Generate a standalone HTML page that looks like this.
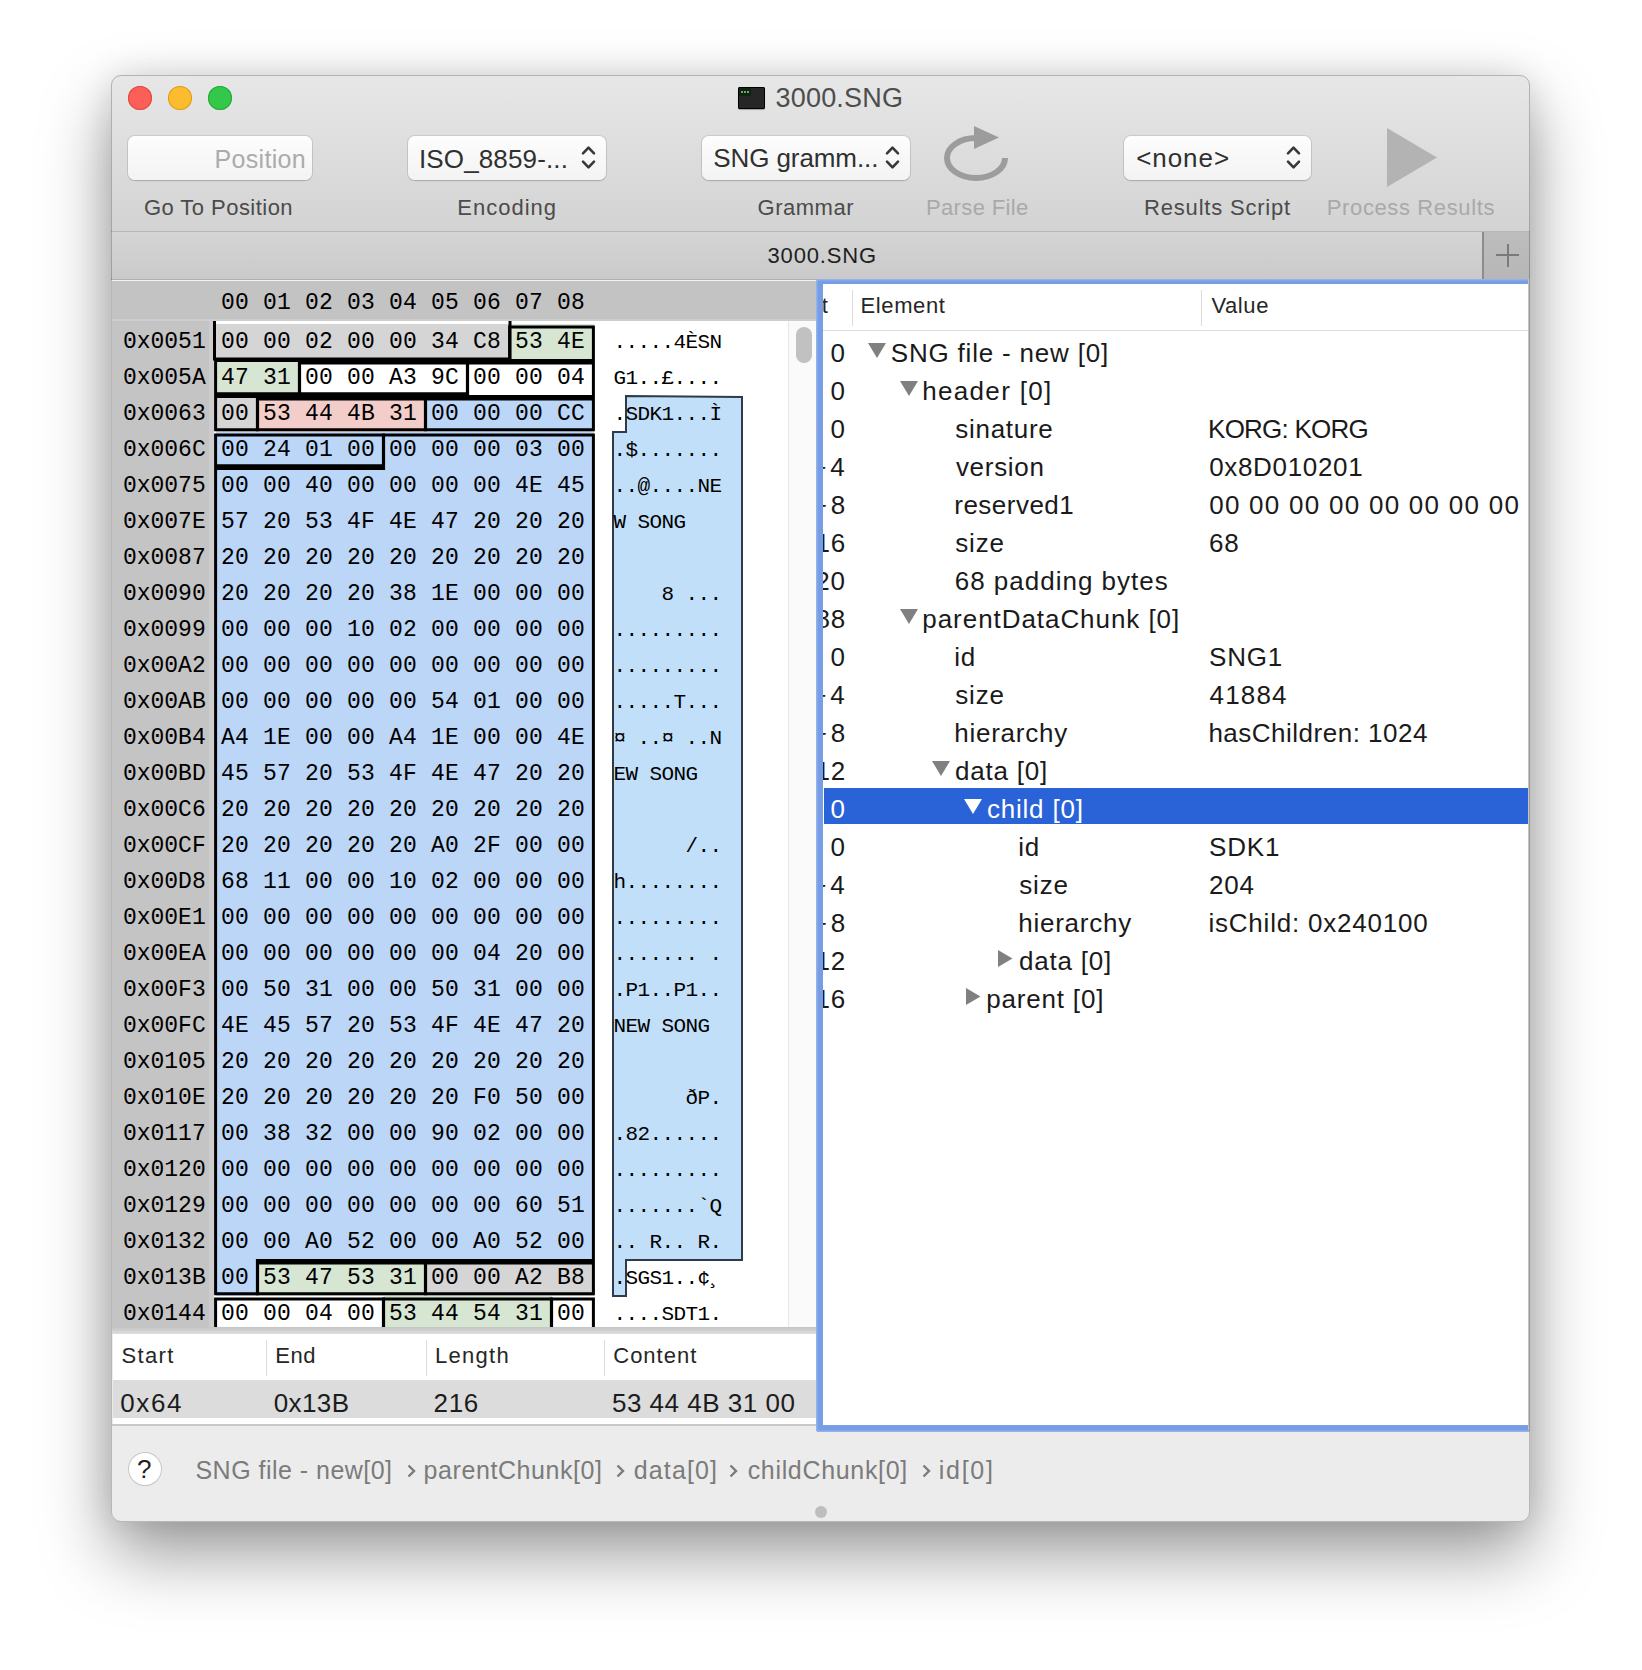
<!DOCTYPE html>
<html><head><meta charset="utf-8">
<style>
html,body{margin:0;padding:0;}
body{width:1642px;height:1670px;background:#ffffff;position:relative;overflow:hidden;font-family:"Liberation Sans",sans-serif;}
.abs{position:absolute;}
.c{position:absolute;}
#win{position:absolute;left:111px;top:75px;width:1419px;height:1447px;border-radius:10px;background:#ececec;
 box-shadow:0 0 34px 0 rgba(0,0,0,0.11),0 32px 70px 0 rgba(0,0,0,0.40);overflow:hidden;}
#tb{position:absolute;left:0;top:0;width:1419px;height:156px;background:linear-gradient(#e7e7e7,#d3d3d3);border-bottom:1px solid #b6b6b6;}
.light{position:absolute;width:24px;height:24px;border-radius:50%;top:11px;}
.fld{position:absolute;background:linear-gradient(#fdfdfd,#f3f3f3);border-radius:7px;box-shadow:0 0 0 1px rgba(0,0,0,0.09),0 1px 1.5px rgba(0,0,0,0.14);}
#tab{position:absolute;left:0;top:157px;width:1419px;height:47px;background:linear-gradient(#d5d5d5,#cacaca);border-bottom:1px solid #afafaf;}
.sep{position:absolute;width:1px;background:#dcdcdc;}
</style></head><body>
<div id="win">
 <div id="tb">
  <div class="light" style="left:17px;background:#fc5f57;box-shadow:inset 0 0 0 1px #de4a42;"></div>
  <div class="light" style="left:57px;background:#fdbc2e;box-shadow:inset 0 0 0 1px #dd9d21;"></div>
  <div class="light" style="left:97px;background:#34c84a;box-shadow:inset 0 0 0 1px #25a73a;"></div>
  <div class="abs" style="left:627px;top:12px;width:27px;height:22px;background:#262626;border-radius:2px;box-shadow:inset 0 0 0 1px #000,0 1px 1px rgba(0,0,0,0.3);">
   <div class="abs" style="left:1px;top:1px;width:12px;height:8px;background:#0b260b;"></div>
   <div class="abs" style="left:3px;top:4px;width:9px;height:2px;background:repeating-linear-gradient(90deg,#8a8f8a 0 2px,transparent 2px 3px);"></div>
  </div>
  <div class="fld" style="left:17px;top:61px;width:184px;height:44px;"></div>
  <div class="fld" style="left:297px;top:61px;width:198px;height:44px;">
   <svg class="abs" style="left:172px;top:9px" width="17" height="26" viewBox="0 0 17 26"><path d="M3 8.3 L8.5 2.6 L14 8.3 M3 16.7 L8.5 22.4 L14 16.7" fill="none" stroke="#383838" stroke-width="2.6" stroke-linecap="round" stroke-linejoin="round"/></svg></div>
  <div class="fld" style="left:591px;top:61px;width:208px;height:44px;">
   <svg class="abs" style="left:182px;top:9px" width="17" height="26" viewBox="0 0 17 26"><path d="M3 8.3 L8.5 2.6 L14 8.3 M3 16.7 L8.5 22.4 L14 16.7" fill="none" stroke="#383838" stroke-width="2.6" stroke-linecap="round" stroke-linejoin="round"/></svg></div>
  <svg class="abs" style="left:820px;top:45px" width="80" height="72" viewBox="0 0 80 72">
   <path d="M45 18 A29 20 0 1 0 74 38" fill="none" stroke="#9c9c9c" stroke-width="6"/>
   <path d="M43 6 L68 17.5 L43 29 Z" fill="#9c9c9c"/>
  </svg>
  <div class="fld" style="left:1013px;top:61px;width:187px;height:44px;">
   <svg class="abs" style="left:161px;top:9px" width="17" height="26" viewBox="0 0 17 26"><path d="M3 8.3 L8.5 2.6 L14 8.3 M3 16.7 L8.5 22.4 L14 16.7" fill="none" stroke="#383838" stroke-width="2.6" stroke-linecap="round" stroke-linejoin="round"/></svg></div>
  <svg class="abs" style="left:1276px;top:53px" width="52" height="60" viewBox="0 0 52 60"><path d="M0 0 L50 29.5 L0 59 Z" fill="#b3b3b3"/></svg>
 </div>
 <div id="tab">
  <div class="abs" style="left:1371px;top:0;width:48px;height:47px;background:linear-gradient(#bdbdbd,#b7b7b7);border-left:2px solid #8c8c8c;">
   <div class="abs" style="left:12px;top:22px;width:23px;height:2px;background:#7a7a7a;"></div>
   <div class="abs" style="left:22.5px;top:12px;width:2px;height:23px;background:#7a7a7a;"></div>
  </div>
 </div>
</div>
<div style="position:absolute;left:775.57px;top:85.44px;font-family:'Liberation Sans',sans-serif;font-size:27px;line-height:1;letter-spacing:0.182px;color:#4d4d4d;white-space:pre;">3000.SNG</div>
<div style="position:absolute;left:143.89px;top:197.37px;font-family:'Liberation Sans',sans-serif;font-size:22px;line-height:1;letter-spacing:0.463px;color:#4b4b4b;white-space:pre;">Go To Position</div>
<div style="position:absolute;left:457.20px;top:197.37px;font-family:'Liberation Sans',sans-serif;font-size:22px;line-height:1;letter-spacing:1.026px;color:#4b4b4b;white-space:pre;">Encoding</div>
<div style="position:absolute;left:757.49px;top:197.37px;font-family:'Liberation Sans',sans-serif;font-size:22px;line-height:1;letter-spacing:0.531px;color:#4b4b4b;white-space:pre;">Grammar</div>
<div style="position:absolute;left:926.00px;top:197.37px;font-family:'Liberation Sans',sans-serif;font-size:22px;line-height:1;letter-spacing:0.350px;color:#a9a9a9;white-space:pre;">Parse File</div>
<div style="position:absolute;left:1144.10px;top:197.37px;font-family:'Liberation Sans',sans-serif;font-size:22px;line-height:1;letter-spacing:0.797px;color:#4b4b4b;white-space:pre;">Results Script</div>
<div style="position:absolute;left:1326.80px;top:197.37px;font-family:'Liberation Sans',sans-serif;font-size:22px;line-height:1;letter-spacing:0.618px;color:#a9a9a9;white-space:pre;">Process Results</div>
<div style="position:absolute;left:214.55px;top:146.83px;font-family:'Liberation Sans',sans-serif;font-size:25px;line-height:1;letter-spacing:0.305px;color:#ababab;white-space:pre;">Position</div>
<div style="position:absolute;left:419.00px;top:146.19px;font-family:'Liberation Sans',sans-serif;font-size:26px;line-height:1;letter-spacing:0.132px;color:#303030;white-space:pre;">ISO_8859-...</div>
<div style="position:absolute;left:713.32px;top:145.49px;font-family:'Liberation Sans',sans-serif;font-size:26px;line-height:1;letter-spacing:-0.098px;color:#303030;white-space:pre;">SNG gramm...</div>
<div style="position:absolute;left:1136.22px;top:145.49px;font-family:'Liberation Sans',sans-serif;font-size:26px;line-height:1;letter-spacing:0.929px;color:#303030;white-space:pre;">&lt;none&gt;</div>
<div style="position:absolute;left:767.46px;top:244.87px;font-family:'Liberation Sans',sans-serif;font-size:22px;line-height:1;letter-spacing:0.851px;color:#1e1e1e;white-space:pre;">3000.SNG</div>

<!-- HEX PANEL -->
<div class="abs" style="left:112px;top:280px;width:704px;height:1px;background:#f4f4f4;"></div>
<div class="abs" style="left:112px;top:281px;width:704px;height:1048px;background:#fff;"></div>
<div class="abs" style="left:112px;top:281px;width:704px;height:38px;background:#c3c3c3;"></div>
<div class="abs" style="left:112px;top:319px;width:704px;height:2px;background:#cdcdcd;"></div>
<div class="abs" style="left:112px;top:321px;width:97px;height:1008px;background:#c4c4c4;"></div><div class="abs" style="left:209px;top:321px;width:5px;height:1008px;background:#cdcdcd;"></div>
<div class="abs" style="left:788px;top:321px;width:28px;height:1008px;background:#fafafa;border-left:1px solid #e6e6e6;"></div>
<div class="abs" style="left:796px;top:327px;width:16px;height:36px;border-radius:8px;background:#c1c1c1;"></div>
<div style="position:absolute;left:221.10px;top:291.88px;font-family:'Liberation Mono',monospace;font-size:23px;line-height:1;letter-spacing:0.000px;color:#000;white-space:pre;">00</div>
<div style="position:absolute;left:263.10px;top:291.88px;font-family:'Liberation Mono',monospace;font-size:23px;line-height:1;letter-spacing:0.000px;color:#000;white-space:pre;">01</div>
<div style="position:absolute;left:305.10px;top:291.88px;font-family:'Liberation Mono',monospace;font-size:23px;line-height:1;letter-spacing:0.000px;color:#000;white-space:pre;">02</div>
<div style="position:absolute;left:347.10px;top:291.88px;font-family:'Liberation Mono',monospace;font-size:23px;line-height:1;letter-spacing:0.000px;color:#000;white-space:pre;">03</div>
<div style="position:absolute;left:389.10px;top:291.88px;font-family:'Liberation Mono',monospace;font-size:23px;line-height:1;letter-spacing:0.000px;color:#000;white-space:pre;">04</div>
<div style="position:absolute;left:431.10px;top:291.88px;font-family:'Liberation Mono',monospace;font-size:23px;line-height:1;letter-spacing:0.000px;color:#000;white-space:pre;">05</div>
<div style="position:absolute;left:473.10px;top:291.88px;font-family:'Liberation Mono',monospace;font-size:23px;line-height:1;letter-spacing:0.000px;color:#000;white-space:pre;">06</div>
<div style="position:absolute;left:515.10px;top:291.88px;font-family:'Liberation Mono',monospace;font-size:23px;line-height:1;letter-spacing:0.000px;color:#000;white-space:pre;">07</div>
<div style="position:absolute;left:557.10px;top:291.88px;font-family:'Liberation Mono',monospace;font-size:23px;line-height:1;letter-spacing:0.000px;color:#000;white-space:pre;">08</div>
<div class="abs" style="left:0;top:0;width:1642px;height:1329px;overflow:hidden;clip-path:inset(321px 826px 2px 112px);">
<div class="c" style="left:216px;top:324px;width:294px;height:36px;background:#d5d5d5"></div>
<div class="c" style="left:510px;top:324px;width:84px;height:36px;background:#d7e6d2"></div>
<div class="c" style="left:216px;top:360px;width:84px;height:36px;background:#d7e6d2"></div>
<div class="c" style="left:216px;top:396px;width:42px;height:36px;background:#d5d5d5"></div>
<div class="c" style="left:258px;top:396px;width:168px;height:36px;background:#f2cdc9"></div>
<div class="c" style="left:426px;top:396px;width:168px;height:36px;background:#bcd6f7"></div>
<div class="c" style="left:216px;top:432px;width:378px;height:36px;background:#bcd6f7"></div>
<div class="c" style="left:216px;top:468px;width:378px;height:36px;background:#bcd6f7"></div>
<div class="c" style="left:216px;top:504px;width:378px;height:36px;background:#bcd6f7"></div>
<div class="c" style="left:216px;top:540px;width:378px;height:36px;background:#bcd6f7"></div>
<div class="c" style="left:216px;top:576px;width:378px;height:36px;background:#bcd6f7"></div>
<div class="c" style="left:216px;top:612px;width:378px;height:36px;background:#bcd6f7"></div>
<div class="c" style="left:216px;top:648px;width:378px;height:36px;background:#bcd6f7"></div>
<div class="c" style="left:216px;top:684px;width:378px;height:36px;background:#bcd6f7"></div>
<div class="c" style="left:216px;top:720px;width:378px;height:36px;background:#bcd6f7"></div>
<div class="c" style="left:216px;top:756px;width:378px;height:36px;background:#bcd6f7"></div>
<div class="c" style="left:216px;top:792px;width:378px;height:36px;background:#bcd6f7"></div>
<div class="c" style="left:216px;top:828px;width:378px;height:36px;background:#bcd6f7"></div>
<div class="c" style="left:216px;top:864px;width:378px;height:36px;background:#bcd6f7"></div>
<div class="c" style="left:216px;top:900px;width:378px;height:36px;background:#bcd6f7"></div>
<div class="c" style="left:216px;top:936px;width:378px;height:36px;background:#bcd6f7"></div>
<div class="c" style="left:216px;top:972px;width:378px;height:36px;background:#bcd6f7"></div>
<div class="c" style="left:216px;top:1008px;width:378px;height:36px;background:#bcd6f7"></div>
<div class="c" style="left:216px;top:1044px;width:378px;height:36px;background:#bcd6f7"></div>
<div class="c" style="left:216px;top:1080px;width:378px;height:36px;background:#bcd6f7"></div>
<div class="c" style="left:216px;top:1116px;width:378px;height:36px;background:#bcd6f7"></div>
<div class="c" style="left:216px;top:1152px;width:378px;height:36px;background:#bcd6f7"></div>
<div class="c" style="left:216px;top:1188px;width:378px;height:36px;background:#bcd6f7"></div>
<div class="c" style="left:216px;top:1224px;width:378px;height:36px;background:#bcd6f7"></div>
<div class="c" style="left:216px;top:1260px;width:42px;height:36px;background:#bcd6f7"></div>
<div class="c" style="left:258px;top:1260px;width:168px;height:36px;background:#d7e6d2"></div>
<div class="c" style="left:426px;top:1260px;width:168px;height:36px;background:#d5d5d5"></div>
<div class="c" style="left:384px;top:1296px;width:168px;height:36px;background:#d7e6d2"></div>
<svg class="abs" style="left:0;top:0" width="1642" height="1340"><path d="M626 396 L742 397 L742 1260 L626 1260 L626 1296 L613 1296 L613 432 L626 432 Z" fill="#c2dff9" stroke="#2e3b4a" stroke-width="2"/><g fill="none" stroke="#000" stroke-width="3"><path d="M509.6 327.0 L593.4 327.0 L593.4 360.5 L299.4 360.5 L299.4 393.7 L215.6 393.7 L215.6 360.5 L509.6 360.5 Z"/><path d="M299.6 363.0 L467.4 363.0 L467.4 393.7 L299.6 393.7 Z"/><path d="M467.6 363.0 L593.4 363.0 L593.4 396.5 L257.4 396.5 L257.4 429.7 L215.6 429.7 L215.6 396.5 L467.6 396.5 Z"/><path d="M257.6 399.0 L425.4 399.0 L425.4 429.7 L257.6 429.7 Z"/><path d="M425.6 399.0 L593.4 399.0 L593.4 429.7 L425.6 429.7 Z"/><path d="M215.6 435.0 L383.4 435.0 L383.4 465.7 L215.6 465.7 Z"/><path d="M383.6 435.0 L593.4 435.0 L593.4 1260.5 L257.4 1260.5 L257.4 1293.7 L215.6 1293.7 L215.6 468.5 L383.6 468.5 Z"/><path d="M257.6 1263.0 L425.4 1263.0 L425.4 1293.7 L257.6 1293.7 Z"/><path d="M425.6 1263.0 L593.4 1263.0 L593.4 1293.7 L425.6 1293.7 Z"/><path d="M215.6 1299.0 L383.4 1299.0 L383.4 1329.7 L215.6 1329.7 Z"/><path d="M383.6 1299.0 L551.4 1299.0 L551.4 1329.7 L383.6 1329.7 Z"/><path d="M551.6 1299.0 L593.4 1299.0 L593.4 1329.7 L551.6 1329.7 Z"/><path d="M214.5 300.0 L214.5 359.0 L510.0 359.0 L510.0 300.0"/></g></svg>
<div style="position:absolute;left:122.90px;top:331.38px;font-family:'Liberation Mono',monospace;font-size:23px;line-height:1;letter-spacing:0.000px;color:#000;white-space:pre;">0x0051</div>
<div style="position:absolute;left:221.10px;top:331.38px;font-family:'Liberation Mono',monospace;font-size:23px;line-height:1;letter-spacing:0.000px;color:#000;white-space:pre;">00</div>
<div style="position:absolute;left:263.10px;top:331.38px;font-family:'Liberation Mono',monospace;font-size:23px;line-height:1;letter-spacing:0.000px;color:#000;white-space:pre;">00</div>
<div style="position:absolute;left:305.10px;top:331.38px;font-family:'Liberation Mono',monospace;font-size:23px;line-height:1;letter-spacing:0.000px;color:#000;white-space:pre;">02</div>
<div style="position:absolute;left:347.10px;top:331.38px;font-family:'Liberation Mono',monospace;font-size:23px;line-height:1;letter-spacing:0.000px;color:#000;white-space:pre;">00</div>
<div style="position:absolute;left:389.10px;top:331.38px;font-family:'Liberation Mono',monospace;font-size:23px;line-height:1;letter-spacing:0.000px;color:#000;white-space:pre;">00</div>
<div style="position:absolute;left:431.10px;top:331.38px;font-family:'Liberation Mono',monospace;font-size:23px;line-height:1;letter-spacing:0.000px;color:#000;white-space:pre;">34</div>
<div style="position:absolute;left:473.10px;top:331.38px;font-family:'Liberation Mono',monospace;font-size:23px;line-height:1;letter-spacing:0.000px;color:#000;white-space:pre;">C8</div>
<div style="position:absolute;left:515.10px;top:331.38px;font-family:'Liberation Mono',monospace;font-size:23px;line-height:1;letter-spacing:0.000px;color:#000;white-space:pre;">53</div>
<div style="position:absolute;left:557.10px;top:331.38px;font-family:'Liberation Mono',monospace;font-size:23px;line-height:1;letter-spacing:0.000px;color:#000;white-space:pre;">4E</div>
<div style="position:absolute;left:613.40px;top:332.41px;font-family:'Liberation Mono',monospace;font-size:21px;line-height:1;letter-spacing:-0.600px;color:#000;white-space:pre;">.....4ÈSN</div>
<div style="position:absolute;left:122.90px;top:367.38px;font-family:'Liberation Mono',monospace;font-size:23px;line-height:1;letter-spacing:0.000px;color:#000;white-space:pre;">0x005A</div>
<div style="position:absolute;left:221.10px;top:367.38px;font-family:'Liberation Mono',monospace;font-size:23px;line-height:1;letter-spacing:0.000px;color:#000;white-space:pre;">47</div>
<div style="position:absolute;left:263.10px;top:367.38px;font-family:'Liberation Mono',monospace;font-size:23px;line-height:1;letter-spacing:0.000px;color:#000;white-space:pre;">31</div>
<div style="position:absolute;left:305.10px;top:367.38px;font-family:'Liberation Mono',monospace;font-size:23px;line-height:1;letter-spacing:0.000px;color:#000;white-space:pre;">00</div>
<div style="position:absolute;left:347.10px;top:367.38px;font-family:'Liberation Mono',monospace;font-size:23px;line-height:1;letter-spacing:0.000px;color:#000;white-space:pre;">00</div>
<div style="position:absolute;left:389.10px;top:367.38px;font-family:'Liberation Mono',monospace;font-size:23px;line-height:1;letter-spacing:0.000px;color:#000;white-space:pre;">A3</div>
<div style="position:absolute;left:431.10px;top:367.38px;font-family:'Liberation Mono',monospace;font-size:23px;line-height:1;letter-spacing:0.000px;color:#000;white-space:pre;">9C</div>
<div style="position:absolute;left:473.10px;top:367.38px;font-family:'Liberation Mono',monospace;font-size:23px;line-height:1;letter-spacing:0.000px;color:#000;white-space:pre;">00</div>
<div style="position:absolute;left:515.10px;top:367.38px;font-family:'Liberation Mono',monospace;font-size:23px;line-height:1;letter-spacing:0.000px;color:#000;white-space:pre;">00</div>
<div style="position:absolute;left:557.10px;top:367.38px;font-family:'Liberation Mono',monospace;font-size:23px;line-height:1;letter-spacing:0.000px;color:#000;white-space:pre;">04</div>
<div style="position:absolute;left:613.40px;top:368.41px;font-family:'Liberation Mono',monospace;font-size:21px;line-height:1;letter-spacing:-0.600px;color:#000;white-space:pre;">G1..£....</div>
<div style="position:absolute;left:122.90px;top:403.38px;font-family:'Liberation Mono',monospace;font-size:23px;line-height:1;letter-spacing:0.000px;color:#000;white-space:pre;">0x0063</div>
<div style="position:absolute;left:221.10px;top:403.38px;font-family:'Liberation Mono',monospace;font-size:23px;line-height:1;letter-spacing:0.000px;color:#000;white-space:pre;">00</div>
<div style="position:absolute;left:263.10px;top:403.38px;font-family:'Liberation Mono',monospace;font-size:23px;line-height:1;letter-spacing:0.000px;color:#000;white-space:pre;">53</div>
<div style="position:absolute;left:305.10px;top:403.38px;font-family:'Liberation Mono',monospace;font-size:23px;line-height:1;letter-spacing:0.000px;color:#000;white-space:pre;">44</div>
<div style="position:absolute;left:347.10px;top:403.38px;font-family:'Liberation Mono',monospace;font-size:23px;line-height:1;letter-spacing:0.000px;color:#000;white-space:pre;">4B</div>
<div style="position:absolute;left:389.10px;top:403.38px;font-family:'Liberation Mono',monospace;font-size:23px;line-height:1;letter-spacing:0.000px;color:#000;white-space:pre;">31</div>
<div style="position:absolute;left:431.10px;top:403.38px;font-family:'Liberation Mono',monospace;font-size:23px;line-height:1;letter-spacing:0.000px;color:#000;white-space:pre;">00</div>
<div style="position:absolute;left:473.10px;top:403.38px;font-family:'Liberation Mono',monospace;font-size:23px;line-height:1;letter-spacing:0.000px;color:#000;white-space:pre;">00</div>
<div style="position:absolute;left:515.10px;top:403.38px;font-family:'Liberation Mono',monospace;font-size:23px;line-height:1;letter-spacing:0.000px;color:#000;white-space:pre;">00</div>
<div style="position:absolute;left:557.10px;top:403.38px;font-family:'Liberation Mono',monospace;font-size:23px;line-height:1;letter-spacing:0.000px;color:#000;white-space:pre;">CC</div>
<div style="position:absolute;left:613.40px;top:404.41px;font-family:'Liberation Mono',monospace;font-size:21px;line-height:1;letter-spacing:-0.600px;color:#000;white-space:pre;">.SDK1...Ì</div>
<div style="position:absolute;left:122.90px;top:439.38px;font-family:'Liberation Mono',monospace;font-size:23px;line-height:1;letter-spacing:0.000px;color:#000;white-space:pre;">0x006C</div>
<div style="position:absolute;left:221.10px;top:439.38px;font-family:'Liberation Mono',monospace;font-size:23px;line-height:1;letter-spacing:0.000px;color:#000;white-space:pre;">00</div>
<div style="position:absolute;left:263.10px;top:439.38px;font-family:'Liberation Mono',monospace;font-size:23px;line-height:1;letter-spacing:0.000px;color:#000;white-space:pre;">24</div>
<div style="position:absolute;left:305.10px;top:439.38px;font-family:'Liberation Mono',monospace;font-size:23px;line-height:1;letter-spacing:0.000px;color:#000;white-space:pre;">01</div>
<div style="position:absolute;left:347.10px;top:439.38px;font-family:'Liberation Mono',monospace;font-size:23px;line-height:1;letter-spacing:0.000px;color:#000;white-space:pre;">00</div>
<div style="position:absolute;left:389.10px;top:439.38px;font-family:'Liberation Mono',monospace;font-size:23px;line-height:1;letter-spacing:0.000px;color:#000;white-space:pre;">00</div>
<div style="position:absolute;left:431.10px;top:439.38px;font-family:'Liberation Mono',monospace;font-size:23px;line-height:1;letter-spacing:0.000px;color:#000;white-space:pre;">00</div>
<div style="position:absolute;left:473.10px;top:439.38px;font-family:'Liberation Mono',monospace;font-size:23px;line-height:1;letter-spacing:0.000px;color:#000;white-space:pre;">00</div>
<div style="position:absolute;left:515.10px;top:439.38px;font-family:'Liberation Mono',monospace;font-size:23px;line-height:1;letter-spacing:0.000px;color:#000;white-space:pre;">03</div>
<div style="position:absolute;left:557.10px;top:439.38px;font-family:'Liberation Mono',monospace;font-size:23px;line-height:1;letter-spacing:0.000px;color:#000;white-space:pre;">00</div>
<div style="position:absolute;left:613.40px;top:440.41px;font-family:'Liberation Mono',monospace;font-size:21px;line-height:1;letter-spacing:-0.600px;color:#000;white-space:pre;">.$.......</div>
<div style="position:absolute;left:122.90px;top:475.38px;font-family:'Liberation Mono',monospace;font-size:23px;line-height:1;letter-spacing:0.000px;color:#000;white-space:pre;">0x0075</div>
<div style="position:absolute;left:221.10px;top:475.38px;font-family:'Liberation Mono',monospace;font-size:23px;line-height:1;letter-spacing:0.000px;color:#000;white-space:pre;">00</div>
<div style="position:absolute;left:263.10px;top:475.38px;font-family:'Liberation Mono',monospace;font-size:23px;line-height:1;letter-spacing:0.000px;color:#000;white-space:pre;">00</div>
<div style="position:absolute;left:305.10px;top:475.38px;font-family:'Liberation Mono',monospace;font-size:23px;line-height:1;letter-spacing:0.000px;color:#000;white-space:pre;">40</div>
<div style="position:absolute;left:347.10px;top:475.38px;font-family:'Liberation Mono',monospace;font-size:23px;line-height:1;letter-spacing:0.000px;color:#000;white-space:pre;">00</div>
<div style="position:absolute;left:389.10px;top:475.38px;font-family:'Liberation Mono',monospace;font-size:23px;line-height:1;letter-spacing:0.000px;color:#000;white-space:pre;">00</div>
<div style="position:absolute;left:431.10px;top:475.38px;font-family:'Liberation Mono',monospace;font-size:23px;line-height:1;letter-spacing:0.000px;color:#000;white-space:pre;">00</div>
<div style="position:absolute;left:473.10px;top:475.38px;font-family:'Liberation Mono',monospace;font-size:23px;line-height:1;letter-spacing:0.000px;color:#000;white-space:pre;">00</div>
<div style="position:absolute;left:515.10px;top:475.38px;font-family:'Liberation Mono',monospace;font-size:23px;line-height:1;letter-spacing:0.000px;color:#000;white-space:pre;">4E</div>
<div style="position:absolute;left:557.10px;top:475.38px;font-family:'Liberation Mono',monospace;font-size:23px;line-height:1;letter-spacing:0.000px;color:#000;white-space:pre;">45</div>
<div style="position:absolute;left:613.40px;top:476.41px;font-family:'Liberation Mono',monospace;font-size:21px;line-height:1;letter-spacing:-0.600px;color:#000;white-space:pre;">..@....NE</div>
<div style="position:absolute;left:122.90px;top:511.38px;font-family:'Liberation Mono',monospace;font-size:23px;line-height:1;letter-spacing:0.000px;color:#000;white-space:pre;">0x007E</div>
<div style="position:absolute;left:221.10px;top:511.38px;font-family:'Liberation Mono',monospace;font-size:23px;line-height:1;letter-spacing:0.000px;color:#000;white-space:pre;">57</div>
<div style="position:absolute;left:263.10px;top:511.38px;font-family:'Liberation Mono',monospace;font-size:23px;line-height:1;letter-spacing:0.000px;color:#000;white-space:pre;">20</div>
<div style="position:absolute;left:305.10px;top:511.38px;font-family:'Liberation Mono',monospace;font-size:23px;line-height:1;letter-spacing:0.000px;color:#000;white-space:pre;">53</div>
<div style="position:absolute;left:347.10px;top:511.38px;font-family:'Liberation Mono',monospace;font-size:23px;line-height:1;letter-spacing:0.000px;color:#000;white-space:pre;">4F</div>
<div style="position:absolute;left:389.10px;top:511.38px;font-family:'Liberation Mono',monospace;font-size:23px;line-height:1;letter-spacing:0.000px;color:#000;white-space:pre;">4E</div>
<div style="position:absolute;left:431.10px;top:511.38px;font-family:'Liberation Mono',monospace;font-size:23px;line-height:1;letter-spacing:0.000px;color:#000;white-space:pre;">47</div>
<div style="position:absolute;left:473.10px;top:511.38px;font-family:'Liberation Mono',monospace;font-size:23px;line-height:1;letter-spacing:0.000px;color:#000;white-space:pre;">20</div>
<div style="position:absolute;left:515.10px;top:511.38px;font-family:'Liberation Mono',monospace;font-size:23px;line-height:1;letter-spacing:0.000px;color:#000;white-space:pre;">20</div>
<div style="position:absolute;left:557.10px;top:511.38px;font-family:'Liberation Mono',monospace;font-size:23px;line-height:1;letter-spacing:0.000px;color:#000;white-space:pre;">20</div>
<div style="position:absolute;left:613.40px;top:512.41px;font-family:'Liberation Mono',monospace;font-size:21px;line-height:1;letter-spacing:-0.600px;color:#000;white-space:pre;">W SONG   </div>
<div style="position:absolute;left:122.90px;top:547.38px;font-family:'Liberation Mono',monospace;font-size:23px;line-height:1;letter-spacing:0.000px;color:#000;white-space:pre;">0x0087</div>
<div style="position:absolute;left:221.10px;top:547.38px;font-family:'Liberation Mono',monospace;font-size:23px;line-height:1;letter-spacing:0.000px;color:#000;white-space:pre;">20</div>
<div style="position:absolute;left:263.10px;top:547.38px;font-family:'Liberation Mono',monospace;font-size:23px;line-height:1;letter-spacing:0.000px;color:#000;white-space:pre;">20</div>
<div style="position:absolute;left:305.10px;top:547.38px;font-family:'Liberation Mono',monospace;font-size:23px;line-height:1;letter-spacing:0.000px;color:#000;white-space:pre;">20</div>
<div style="position:absolute;left:347.10px;top:547.38px;font-family:'Liberation Mono',monospace;font-size:23px;line-height:1;letter-spacing:0.000px;color:#000;white-space:pre;">20</div>
<div style="position:absolute;left:389.10px;top:547.38px;font-family:'Liberation Mono',monospace;font-size:23px;line-height:1;letter-spacing:0.000px;color:#000;white-space:pre;">20</div>
<div style="position:absolute;left:431.10px;top:547.38px;font-family:'Liberation Mono',monospace;font-size:23px;line-height:1;letter-spacing:0.000px;color:#000;white-space:pre;">20</div>
<div style="position:absolute;left:473.10px;top:547.38px;font-family:'Liberation Mono',monospace;font-size:23px;line-height:1;letter-spacing:0.000px;color:#000;white-space:pre;">20</div>
<div style="position:absolute;left:515.10px;top:547.38px;font-family:'Liberation Mono',monospace;font-size:23px;line-height:1;letter-spacing:0.000px;color:#000;white-space:pre;">20</div>
<div style="position:absolute;left:557.10px;top:547.38px;font-family:'Liberation Mono',monospace;font-size:23px;line-height:1;letter-spacing:0.000px;color:#000;white-space:pre;">20</div>
<div style="position:absolute;left:613.40px;top:548.41px;font-family:'Liberation Mono',monospace;font-size:21px;line-height:1;letter-spacing:-0.600px;color:#000;white-space:pre;">         </div>
<div style="position:absolute;left:122.90px;top:583.38px;font-family:'Liberation Mono',monospace;font-size:23px;line-height:1;letter-spacing:0.000px;color:#000;white-space:pre;">0x0090</div>
<div style="position:absolute;left:221.10px;top:583.38px;font-family:'Liberation Mono',monospace;font-size:23px;line-height:1;letter-spacing:0.000px;color:#000;white-space:pre;">20</div>
<div style="position:absolute;left:263.10px;top:583.38px;font-family:'Liberation Mono',monospace;font-size:23px;line-height:1;letter-spacing:0.000px;color:#000;white-space:pre;">20</div>
<div style="position:absolute;left:305.10px;top:583.38px;font-family:'Liberation Mono',monospace;font-size:23px;line-height:1;letter-spacing:0.000px;color:#000;white-space:pre;">20</div>
<div style="position:absolute;left:347.10px;top:583.38px;font-family:'Liberation Mono',monospace;font-size:23px;line-height:1;letter-spacing:0.000px;color:#000;white-space:pre;">20</div>
<div style="position:absolute;left:389.10px;top:583.38px;font-family:'Liberation Mono',monospace;font-size:23px;line-height:1;letter-spacing:0.000px;color:#000;white-space:pre;">38</div>
<div style="position:absolute;left:431.10px;top:583.38px;font-family:'Liberation Mono',monospace;font-size:23px;line-height:1;letter-spacing:0.000px;color:#000;white-space:pre;">1E</div>
<div style="position:absolute;left:473.10px;top:583.38px;font-family:'Liberation Mono',monospace;font-size:23px;line-height:1;letter-spacing:0.000px;color:#000;white-space:pre;">00</div>
<div style="position:absolute;left:515.10px;top:583.38px;font-family:'Liberation Mono',monospace;font-size:23px;line-height:1;letter-spacing:0.000px;color:#000;white-space:pre;">00</div>
<div style="position:absolute;left:557.10px;top:583.38px;font-family:'Liberation Mono',monospace;font-size:23px;line-height:1;letter-spacing:0.000px;color:#000;white-space:pre;">00</div>
<div style="position:absolute;left:613.40px;top:584.41px;font-family:'Liberation Mono',monospace;font-size:21px;line-height:1;letter-spacing:-0.600px;color:#000;white-space:pre;">    8 ...</div>
<div style="position:absolute;left:122.90px;top:619.38px;font-family:'Liberation Mono',monospace;font-size:23px;line-height:1;letter-spacing:0.000px;color:#000;white-space:pre;">0x0099</div>
<div style="position:absolute;left:221.10px;top:619.38px;font-family:'Liberation Mono',monospace;font-size:23px;line-height:1;letter-spacing:0.000px;color:#000;white-space:pre;">00</div>
<div style="position:absolute;left:263.10px;top:619.38px;font-family:'Liberation Mono',monospace;font-size:23px;line-height:1;letter-spacing:0.000px;color:#000;white-space:pre;">00</div>
<div style="position:absolute;left:305.10px;top:619.38px;font-family:'Liberation Mono',monospace;font-size:23px;line-height:1;letter-spacing:0.000px;color:#000;white-space:pre;">00</div>
<div style="position:absolute;left:347.10px;top:619.38px;font-family:'Liberation Mono',monospace;font-size:23px;line-height:1;letter-spacing:0.000px;color:#000;white-space:pre;">10</div>
<div style="position:absolute;left:389.10px;top:619.38px;font-family:'Liberation Mono',monospace;font-size:23px;line-height:1;letter-spacing:0.000px;color:#000;white-space:pre;">02</div>
<div style="position:absolute;left:431.10px;top:619.38px;font-family:'Liberation Mono',monospace;font-size:23px;line-height:1;letter-spacing:0.000px;color:#000;white-space:pre;">00</div>
<div style="position:absolute;left:473.10px;top:619.38px;font-family:'Liberation Mono',monospace;font-size:23px;line-height:1;letter-spacing:0.000px;color:#000;white-space:pre;">00</div>
<div style="position:absolute;left:515.10px;top:619.38px;font-family:'Liberation Mono',monospace;font-size:23px;line-height:1;letter-spacing:0.000px;color:#000;white-space:pre;">00</div>
<div style="position:absolute;left:557.10px;top:619.38px;font-family:'Liberation Mono',monospace;font-size:23px;line-height:1;letter-spacing:0.000px;color:#000;white-space:pre;">00</div>
<div style="position:absolute;left:613.40px;top:620.41px;font-family:'Liberation Mono',monospace;font-size:21px;line-height:1;letter-spacing:-0.600px;color:#000;white-space:pre;">.........</div>
<div style="position:absolute;left:122.90px;top:655.38px;font-family:'Liberation Mono',monospace;font-size:23px;line-height:1;letter-spacing:0.000px;color:#000;white-space:pre;">0x00A2</div>
<div style="position:absolute;left:221.10px;top:655.38px;font-family:'Liberation Mono',monospace;font-size:23px;line-height:1;letter-spacing:0.000px;color:#000;white-space:pre;">00</div>
<div style="position:absolute;left:263.10px;top:655.38px;font-family:'Liberation Mono',monospace;font-size:23px;line-height:1;letter-spacing:0.000px;color:#000;white-space:pre;">00</div>
<div style="position:absolute;left:305.10px;top:655.38px;font-family:'Liberation Mono',monospace;font-size:23px;line-height:1;letter-spacing:0.000px;color:#000;white-space:pre;">00</div>
<div style="position:absolute;left:347.10px;top:655.38px;font-family:'Liberation Mono',monospace;font-size:23px;line-height:1;letter-spacing:0.000px;color:#000;white-space:pre;">00</div>
<div style="position:absolute;left:389.10px;top:655.38px;font-family:'Liberation Mono',monospace;font-size:23px;line-height:1;letter-spacing:0.000px;color:#000;white-space:pre;">00</div>
<div style="position:absolute;left:431.10px;top:655.38px;font-family:'Liberation Mono',monospace;font-size:23px;line-height:1;letter-spacing:0.000px;color:#000;white-space:pre;">00</div>
<div style="position:absolute;left:473.10px;top:655.38px;font-family:'Liberation Mono',monospace;font-size:23px;line-height:1;letter-spacing:0.000px;color:#000;white-space:pre;">00</div>
<div style="position:absolute;left:515.10px;top:655.38px;font-family:'Liberation Mono',monospace;font-size:23px;line-height:1;letter-spacing:0.000px;color:#000;white-space:pre;">00</div>
<div style="position:absolute;left:557.10px;top:655.38px;font-family:'Liberation Mono',monospace;font-size:23px;line-height:1;letter-spacing:0.000px;color:#000;white-space:pre;">00</div>
<div style="position:absolute;left:613.40px;top:656.41px;font-family:'Liberation Mono',monospace;font-size:21px;line-height:1;letter-spacing:-0.600px;color:#000;white-space:pre;">.........</div>
<div style="position:absolute;left:122.90px;top:691.38px;font-family:'Liberation Mono',monospace;font-size:23px;line-height:1;letter-spacing:0.000px;color:#000;white-space:pre;">0x00AB</div>
<div style="position:absolute;left:221.10px;top:691.38px;font-family:'Liberation Mono',monospace;font-size:23px;line-height:1;letter-spacing:0.000px;color:#000;white-space:pre;">00</div>
<div style="position:absolute;left:263.10px;top:691.38px;font-family:'Liberation Mono',monospace;font-size:23px;line-height:1;letter-spacing:0.000px;color:#000;white-space:pre;">00</div>
<div style="position:absolute;left:305.10px;top:691.38px;font-family:'Liberation Mono',monospace;font-size:23px;line-height:1;letter-spacing:0.000px;color:#000;white-space:pre;">00</div>
<div style="position:absolute;left:347.10px;top:691.38px;font-family:'Liberation Mono',monospace;font-size:23px;line-height:1;letter-spacing:0.000px;color:#000;white-space:pre;">00</div>
<div style="position:absolute;left:389.10px;top:691.38px;font-family:'Liberation Mono',monospace;font-size:23px;line-height:1;letter-spacing:0.000px;color:#000;white-space:pre;">00</div>
<div style="position:absolute;left:431.10px;top:691.38px;font-family:'Liberation Mono',monospace;font-size:23px;line-height:1;letter-spacing:0.000px;color:#000;white-space:pre;">54</div>
<div style="position:absolute;left:473.10px;top:691.38px;font-family:'Liberation Mono',monospace;font-size:23px;line-height:1;letter-spacing:0.000px;color:#000;white-space:pre;">01</div>
<div style="position:absolute;left:515.10px;top:691.38px;font-family:'Liberation Mono',monospace;font-size:23px;line-height:1;letter-spacing:0.000px;color:#000;white-space:pre;">00</div>
<div style="position:absolute;left:557.10px;top:691.38px;font-family:'Liberation Mono',monospace;font-size:23px;line-height:1;letter-spacing:0.000px;color:#000;white-space:pre;">00</div>
<div style="position:absolute;left:613.40px;top:692.41px;font-family:'Liberation Mono',monospace;font-size:21px;line-height:1;letter-spacing:-0.600px;color:#000;white-space:pre;">.....T...</div>
<div style="position:absolute;left:122.90px;top:727.38px;font-family:'Liberation Mono',monospace;font-size:23px;line-height:1;letter-spacing:0.000px;color:#000;white-space:pre;">0x00B4</div>
<div style="position:absolute;left:221.10px;top:727.38px;font-family:'Liberation Mono',monospace;font-size:23px;line-height:1;letter-spacing:0.000px;color:#000;white-space:pre;">A4</div>
<div style="position:absolute;left:263.10px;top:727.38px;font-family:'Liberation Mono',monospace;font-size:23px;line-height:1;letter-spacing:0.000px;color:#000;white-space:pre;">1E</div>
<div style="position:absolute;left:305.10px;top:727.38px;font-family:'Liberation Mono',monospace;font-size:23px;line-height:1;letter-spacing:0.000px;color:#000;white-space:pre;">00</div>
<div style="position:absolute;left:347.10px;top:727.38px;font-family:'Liberation Mono',monospace;font-size:23px;line-height:1;letter-spacing:0.000px;color:#000;white-space:pre;">00</div>
<div style="position:absolute;left:389.10px;top:727.38px;font-family:'Liberation Mono',monospace;font-size:23px;line-height:1;letter-spacing:0.000px;color:#000;white-space:pre;">A4</div>
<div style="position:absolute;left:431.10px;top:727.38px;font-family:'Liberation Mono',monospace;font-size:23px;line-height:1;letter-spacing:0.000px;color:#000;white-space:pre;">1E</div>
<div style="position:absolute;left:473.10px;top:727.38px;font-family:'Liberation Mono',monospace;font-size:23px;line-height:1;letter-spacing:0.000px;color:#000;white-space:pre;">00</div>
<div style="position:absolute;left:515.10px;top:727.38px;font-family:'Liberation Mono',monospace;font-size:23px;line-height:1;letter-spacing:0.000px;color:#000;white-space:pre;">00</div>
<div style="position:absolute;left:557.10px;top:727.38px;font-family:'Liberation Mono',monospace;font-size:23px;line-height:1;letter-spacing:0.000px;color:#000;white-space:pre;">4E</div>
<div style="position:absolute;left:613.40px;top:728.41px;font-family:'Liberation Mono',monospace;font-size:21px;line-height:1;letter-spacing:-0.600px;color:#000;white-space:pre;">¤ ..¤ ..N</div>
<div style="position:absolute;left:122.90px;top:763.38px;font-family:'Liberation Mono',monospace;font-size:23px;line-height:1;letter-spacing:0.000px;color:#000;white-space:pre;">0x00BD</div>
<div style="position:absolute;left:221.10px;top:763.38px;font-family:'Liberation Mono',monospace;font-size:23px;line-height:1;letter-spacing:0.000px;color:#000;white-space:pre;">45</div>
<div style="position:absolute;left:263.10px;top:763.38px;font-family:'Liberation Mono',monospace;font-size:23px;line-height:1;letter-spacing:0.000px;color:#000;white-space:pre;">57</div>
<div style="position:absolute;left:305.10px;top:763.38px;font-family:'Liberation Mono',monospace;font-size:23px;line-height:1;letter-spacing:0.000px;color:#000;white-space:pre;">20</div>
<div style="position:absolute;left:347.10px;top:763.38px;font-family:'Liberation Mono',monospace;font-size:23px;line-height:1;letter-spacing:0.000px;color:#000;white-space:pre;">53</div>
<div style="position:absolute;left:389.10px;top:763.38px;font-family:'Liberation Mono',monospace;font-size:23px;line-height:1;letter-spacing:0.000px;color:#000;white-space:pre;">4F</div>
<div style="position:absolute;left:431.10px;top:763.38px;font-family:'Liberation Mono',monospace;font-size:23px;line-height:1;letter-spacing:0.000px;color:#000;white-space:pre;">4E</div>
<div style="position:absolute;left:473.10px;top:763.38px;font-family:'Liberation Mono',monospace;font-size:23px;line-height:1;letter-spacing:0.000px;color:#000;white-space:pre;">47</div>
<div style="position:absolute;left:515.10px;top:763.38px;font-family:'Liberation Mono',monospace;font-size:23px;line-height:1;letter-spacing:0.000px;color:#000;white-space:pre;">20</div>
<div style="position:absolute;left:557.10px;top:763.38px;font-family:'Liberation Mono',monospace;font-size:23px;line-height:1;letter-spacing:0.000px;color:#000;white-space:pre;">20</div>
<div style="position:absolute;left:613.40px;top:764.41px;font-family:'Liberation Mono',monospace;font-size:21px;line-height:1;letter-spacing:-0.600px;color:#000;white-space:pre;">EW SONG  </div>
<div style="position:absolute;left:122.90px;top:799.38px;font-family:'Liberation Mono',monospace;font-size:23px;line-height:1;letter-spacing:0.000px;color:#000;white-space:pre;">0x00C6</div>
<div style="position:absolute;left:221.10px;top:799.38px;font-family:'Liberation Mono',monospace;font-size:23px;line-height:1;letter-spacing:0.000px;color:#000;white-space:pre;">20</div>
<div style="position:absolute;left:263.10px;top:799.38px;font-family:'Liberation Mono',monospace;font-size:23px;line-height:1;letter-spacing:0.000px;color:#000;white-space:pre;">20</div>
<div style="position:absolute;left:305.10px;top:799.38px;font-family:'Liberation Mono',monospace;font-size:23px;line-height:1;letter-spacing:0.000px;color:#000;white-space:pre;">20</div>
<div style="position:absolute;left:347.10px;top:799.38px;font-family:'Liberation Mono',monospace;font-size:23px;line-height:1;letter-spacing:0.000px;color:#000;white-space:pre;">20</div>
<div style="position:absolute;left:389.10px;top:799.38px;font-family:'Liberation Mono',monospace;font-size:23px;line-height:1;letter-spacing:0.000px;color:#000;white-space:pre;">20</div>
<div style="position:absolute;left:431.10px;top:799.38px;font-family:'Liberation Mono',monospace;font-size:23px;line-height:1;letter-spacing:0.000px;color:#000;white-space:pre;">20</div>
<div style="position:absolute;left:473.10px;top:799.38px;font-family:'Liberation Mono',monospace;font-size:23px;line-height:1;letter-spacing:0.000px;color:#000;white-space:pre;">20</div>
<div style="position:absolute;left:515.10px;top:799.38px;font-family:'Liberation Mono',monospace;font-size:23px;line-height:1;letter-spacing:0.000px;color:#000;white-space:pre;">20</div>
<div style="position:absolute;left:557.10px;top:799.38px;font-family:'Liberation Mono',monospace;font-size:23px;line-height:1;letter-spacing:0.000px;color:#000;white-space:pre;">20</div>
<div style="position:absolute;left:613.40px;top:800.41px;font-family:'Liberation Mono',monospace;font-size:21px;line-height:1;letter-spacing:-0.600px;color:#000;white-space:pre;">         </div>
<div style="position:absolute;left:122.90px;top:835.38px;font-family:'Liberation Mono',monospace;font-size:23px;line-height:1;letter-spacing:0.000px;color:#000;white-space:pre;">0x00CF</div>
<div style="position:absolute;left:221.10px;top:835.38px;font-family:'Liberation Mono',monospace;font-size:23px;line-height:1;letter-spacing:0.000px;color:#000;white-space:pre;">20</div>
<div style="position:absolute;left:263.10px;top:835.38px;font-family:'Liberation Mono',monospace;font-size:23px;line-height:1;letter-spacing:0.000px;color:#000;white-space:pre;">20</div>
<div style="position:absolute;left:305.10px;top:835.38px;font-family:'Liberation Mono',monospace;font-size:23px;line-height:1;letter-spacing:0.000px;color:#000;white-space:pre;">20</div>
<div style="position:absolute;left:347.10px;top:835.38px;font-family:'Liberation Mono',monospace;font-size:23px;line-height:1;letter-spacing:0.000px;color:#000;white-space:pre;">20</div>
<div style="position:absolute;left:389.10px;top:835.38px;font-family:'Liberation Mono',monospace;font-size:23px;line-height:1;letter-spacing:0.000px;color:#000;white-space:pre;">20</div>
<div style="position:absolute;left:431.10px;top:835.38px;font-family:'Liberation Mono',monospace;font-size:23px;line-height:1;letter-spacing:0.000px;color:#000;white-space:pre;">A0</div>
<div style="position:absolute;left:473.10px;top:835.38px;font-family:'Liberation Mono',monospace;font-size:23px;line-height:1;letter-spacing:0.000px;color:#000;white-space:pre;">2F</div>
<div style="position:absolute;left:515.10px;top:835.38px;font-family:'Liberation Mono',monospace;font-size:23px;line-height:1;letter-spacing:0.000px;color:#000;white-space:pre;">00</div>
<div style="position:absolute;left:557.10px;top:835.38px;font-family:'Liberation Mono',monospace;font-size:23px;line-height:1;letter-spacing:0.000px;color:#000;white-space:pre;">00</div>
<div style="position:absolute;left:613.40px;top:836.41px;font-family:'Liberation Mono',monospace;font-size:21px;line-height:1;letter-spacing:-0.600px;color:#000;white-space:pre;">      /..</div>
<div style="position:absolute;left:122.90px;top:871.38px;font-family:'Liberation Mono',monospace;font-size:23px;line-height:1;letter-spacing:0.000px;color:#000;white-space:pre;">0x00D8</div>
<div style="position:absolute;left:221.10px;top:871.38px;font-family:'Liberation Mono',monospace;font-size:23px;line-height:1;letter-spacing:0.000px;color:#000;white-space:pre;">68</div>
<div style="position:absolute;left:263.10px;top:871.38px;font-family:'Liberation Mono',monospace;font-size:23px;line-height:1;letter-spacing:0.000px;color:#000;white-space:pre;">11</div>
<div style="position:absolute;left:305.10px;top:871.38px;font-family:'Liberation Mono',monospace;font-size:23px;line-height:1;letter-spacing:0.000px;color:#000;white-space:pre;">00</div>
<div style="position:absolute;left:347.10px;top:871.38px;font-family:'Liberation Mono',monospace;font-size:23px;line-height:1;letter-spacing:0.000px;color:#000;white-space:pre;">00</div>
<div style="position:absolute;left:389.10px;top:871.38px;font-family:'Liberation Mono',monospace;font-size:23px;line-height:1;letter-spacing:0.000px;color:#000;white-space:pre;">10</div>
<div style="position:absolute;left:431.10px;top:871.38px;font-family:'Liberation Mono',monospace;font-size:23px;line-height:1;letter-spacing:0.000px;color:#000;white-space:pre;">02</div>
<div style="position:absolute;left:473.10px;top:871.38px;font-family:'Liberation Mono',monospace;font-size:23px;line-height:1;letter-spacing:0.000px;color:#000;white-space:pre;">00</div>
<div style="position:absolute;left:515.10px;top:871.38px;font-family:'Liberation Mono',monospace;font-size:23px;line-height:1;letter-spacing:0.000px;color:#000;white-space:pre;">00</div>
<div style="position:absolute;left:557.10px;top:871.38px;font-family:'Liberation Mono',monospace;font-size:23px;line-height:1;letter-spacing:0.000px;color:#000;white-space:pre;">00</div>
<div style="position:absolute;left:613.40px;top:872.41px;font-family:'Liberation Mono',monospace;font-size:21px;line-height:1;letter-spacing:-0.600px;color:#000;white-space:pre;">h........</div>
<div style="position:absolute;left:122.90px;top:907.38px;font-family:'Liberation Mono',monospace;font-size:23px;line-height:1;letter-spacing:0.000px;color:#000;white-space:pre;">0x00E1</div>
<div style="position:absolute;left:221.10px;top:907.38px;font-family:'Liberation Mono',monospace;font-size:23px;line-height:1;letter-spacing:0.000px;color:#000;white-space:pre;">00</div>
<div style="position:absolute;left:263.10px;top:907.38px;font-family:'Liberation Mono',monospace;font-size:23px;line-height:1;letter-spacing:0.000px;color:#000;white-space:pre;">00</div>
<div style="position:absolute;left:305.10px;top:907.38px;font-family:'Liberation Mono',monospace;font-size:23px;line-height:1;letter-spacing:0.000px;color:#000;white-space:pre;">00</div>
<div style="position:absolute;left:347.10px;top:907.38px;font-family:'Liberation Mono',monospace;font-size:23px;line-height:1;letter-spacing:0.000px;color:#000;white-space:pre;">00</div>
<div style="position:absolute;left:389.10px;top:907.38px;font-family:'Liberation Mono',monospace;font-size:23px;line-height:1;letter-spacing:0.000px;color:#000;white-space:pre;">00</div>
<div style="position:absolute;left:431.10px;top:907.38px;font-family:'Liberation Mono',monospace;font-size:23px;line-height:1;letter-spacing:0.000px;color:#000;white-space:pre;">00</div>
<div style="position:absolute;left:473.10px;top:907.38px;font-family:'Liberation Mono',monospace;font-size:23px;line-height:1;letter-spacing:0.000px;color:#000;white-space:pre;">00</div>
<div style="position:absolute;left:515.10px;top:907.38px;font-family:'Liberation Mono',monospace;font-size:23px;line-height:1;letter-spacing:0.000px;color:#000;white-space:pre;">00</div>
<div style="position:absolute;left:557.10px;top:907.38px;font-family:'Liberation Mono',monospace;font-size:23px;line-height:1;letter-spacing:0.000px;color:#000;white-space:pre;">00</div>
<div style="position:absolute;left:613.40px;top:908.41px;font-family:'Liberation Mono',monospace;font-size:21px;line-height:1;letter-spacing:-0.600px;color:#000;white-space:pre;">.........</div>
<div style="position:absolute;left:122.90px;top:943.38px;font-family:'Liberation Mono',monospace;font-size:23px;line-height:1;letter-spacing:0.000px;color:#000;white-space:pre;">0x00EA</div>
<div style="position:absolute;left:221.10px;top:943.38px;font-family:'Liberation Mono',monospace;font-size:23px;line-height:1;letter-spacing:0.000px;color:#000;white-space:pre;">00</div>
<div style="position:absolute;left:263.10px;top:943.38px;font-family:'Liberation Mono',monospace;font-size:23px;line-height:1;letter-spacing:0.000px;color:#000;white-space:pre;">00</div>
<div style="position:absolute;left:305.10px;top:943.38px;font-family:'Liberation Mono',monospace;font-size:23px;line-height:1;letter-spacing:0.000px;color:#000;white-space:pre;">00</div>
<div style="position:absolute;left:347.10px;top:943.38px;font-family:'Liberation Mono',monospace;font-size:23px;line-height:1;letter-spacing:0.000px;color:#000;white-space:pre;">00</div>
<div style="position:absolute;left:389.10px;top:943.38px;font-family:'Liberation Mono',monospace;font-size:23px;line-height:1;letter-spacing:0.000px;color:#000;white-space:pre;">00</div>
<div style="position:absolute;left:431.10px;top:943.38px;font-family:'Liberation Mono',monospace;font-size:23px;line-height:1;letter-spacing:0.000px;color:#000;white-space:pre;">00</div>
<div style="position:absolute;left:473.10px;top:943.38px;font-family:'Liberation Mono',monospace;font-size:23px;line-height:1;letter-spacing:0.000px;color:#000;white-space:pre;">04</div>
<div style="position:absolute;left:515.10px;top:943.38px;font-family:'Liberation Mono',monospace;font-size:23px;line-height:1;letter-spacing:0.000px;color:#000;white-space:pre;">20</div>
<div style="position:absolute;left:557.10px;top:943.38px;font-family:'Liberation Mono',monospace;font-size:23px;line-height:1;letter-spacing:0.000px;color:#000;white-space:pre;">00</div>
<div style="position:absolute;left:613.40px;top:944.41px;font-family:'Liberation Mono',monospace;font-size:21px;line-height:1;letter-spacing:-0.600px;color:#000;white-space:pre;">....... .</div>
<div style="position:absolute;left:122.90px;top:979.38px;font-family:'Liberation Mono',monospace;font-size:23px;line-height:1;letter-spacing:0.000px;color:#000;white-space:pre;">0x00F3</div>
<div style="position:absolute;left:221.10px;top:979.38px;font-family:'Liberation Mono',monospace;font-size:23px;line-height:1;letter-spacing:0.000px;color:#000;white-space:pre;">00</div>
<div style="position:absolute;left:263.10px;top:979.38px;font-family:'Liberation Mono',monospace;font-size:23px;line-height:1;letter-spacing:0.000px;color:#000;white-space:pre;">50</div>
<div style="position:absolute;left:305.10px;top:979.38px;font-family:'Liberation Mono',monospace;font-size:23px;line-height:1;letter-spacing:0.000px;color:#000;white-space:pre;">31</div>
<div style="position:absolute;left:347.10px;top:979.38px;font-family:'Liberation Mono',monospace;font-size:23px;line-height:1;letter-spacing:0.000px;color:#000;white-space:pre;">00</div>
<div style="position:absolute;left:389.10px;top:979.38px;font-family:'Liberation Mono',monospace;font-size:23px;line-height:1;letter-spacing:0.000px;color:#000;white-space:pre;">00</div>
<div style="position:absolute;left:431.10px;top:979.38px;font-family:'Liberation Mono',monospace;font-size:23px;line-height:1;letter-spacing:0.000px;color:#000;white-space:pre;">50</div>
<div style="position:absolute;left:473.10px;top:979.38px;font-family:'Liberation Mono',monospace;font-size:23px;line-height:1;letter-spacing:0.000px;color:#000;white-space:pre;">31</div>
<div style="position:absolute;left:515.10px;top:979.38px;font-family:'Liberation Mono',monospace;font-size:23px;line-height:1;letter-spacing:0.000px;color:#000;white-space:pre;">00</div>
<div style="position:absolute;left:557.10px;top:979.38px;font-family:'Liberation Mono',monospace;font-size:23px;line-height:1;letter-spacing:0.000px;color:#000;white-space:pre;">00</div>
<div style="position:absolute;left:613.40px;top:980.41px;font-family:'Liberation Mono',monospace;font-size:21px;line-height:1;letter-spacing:-0.600px;color:#000;white-space:pre;">.P1..P1..</div>
<div style="position:absolute;left:122.90px;top:1015.38px;font-family:'Liberation Mono',monospace;font-size:23px;line-height:1;letter-spacing:0.000px;color:#000;white-space:pre;">0x00FC</div>
<div style="position:absolute;left:221.10px;top:1015.38px;font-family:'Liberation Mono',monospace;font-size:23px;line-height:1;letter-spacing:0.000px;color:#000;white-space:pre;">4E</div>
<div style="position:absolute;left:263.10px;top:1015.38px;font-family:'Liberation Mono',monospace;font-size:23px;line-height:1;letter-spacing:0.000px;color:#000;white-space:pre;">45</div>
<div style="position:absolute;left:305.10px;top:1015.38px;font-family:'Liberation Mono',monospace;font-size:23px;line-height:1;letter-spacing:0.000px;color:#000;white-space:pre;">57</div>
<div style="position:absolute;left:347.10px;top:1015.38px;font-family:'Liberation Mono',monospace;font-size:23px;line-height:1;letter-spacing:0.000px;color:#000;white-space:pre;">20</div>
<div style="position:absolute;left:389.10px;top:1015.38px;font-family:'Liberation Mono',monospace;font-size:23px;line-height:1;letter-spacing:0.000px;color:#000;white-space:pre;">53</div>
<div style="position:absolute;left:431.10px;top:1015.38px;font-family:'Liberation Mono',monospace;font-size:23px;line-height:1;letter-spacing:0.000px;color:#000;white-space:pre;">4F</div>
<div style="position:absolute;left:473.10px;top:1015.38px;font-family:'Liberation Mono',monospace;font-size:23px;line-height:1;letter-spacing:0.000px;color:#000;white-space:pre;">4E</div>
<div style="position:absolute;left:515.10px;top:1015.38px;font-family:'Liberation Mono',monospace;font-size:23px;line-height:1;letter-spacing:0.000px;color:#000;white-space:pre;">47</div>
<div style="position:absolute;left:557.10px;top:1015.38px;font-family:'Liberation Mono',monospace;font-size:23px;line-height:1;letter-spacing:0.000px;color:#000;white-space:pre;">20</div>
<div style="position:absolute;left:613.40px;top:1016.41px;font-family:'Liberation Mono',monospace;font-size:21px;line-height:1;letter-spacing:-0.600px;color:#000;white-space:pre;">NEW SONG </div>
<div style="position:absolute;left:122.90px;top:1051.38px;font-family:'Liberation Mono',monospace;font-size:23px;line-height:1;letter-spacing:0.000px;color:#000;white-space:pre;">0x0105</div>
<div style="position:absolute;left:221.10px;top:1051.38px;font-family:'Liberation Mono',monospace;font-size:23px;line-height:1;letter-spacing:0.000px;color:#000;white-space:pre;">20</div>
<div style="position:absolute;left:263.10px;top:1051.38px;font-family:'Liberation Mono',monospace;font-size:23px;line-height:1;letter-spacing:0.000px;color:#000;white-space:pre;">20</div>
<div style="position:absolute;left:305.10px;top:1051.38px;font-family:'Liberation Mono',monospace;font-size:23px;line-height:1;letter-spacing:0.000px;color:#000;white-space:pre;">20</div>
<div style="position:absolute;left:347.10px;top:1051.38px;font-family:'Liberation Mono',monospace;font-size:23px;line-height:1;letter-spacing:0.000px;color:#000;white-space:pre;">20</div>
<div style="position:absolute;left:389.10px;top:1051.38px;font-family:'Liberation Mono',monospace;font-size:23px;line-height:1;letter-spacing:0.000px;color:#000;white-space:pre;">20</div>
<div style="position:absolute;left:431.10px;top:1051.38px;font-family:'Liberation Mono',monospace;font-size:23px;line-height:1;letter-spacing:0.000px;color:#000;white-space:pre;">20</div>
<div style="position:absolute;left:473.10px;top:1051.38px;font-family:'Liberation Mono',monospace;font-size:23px;line-height:1;letter-spacing:0.000px;color:#000;white-space:pre;">20</div>
<div style="position:absolute;left:515.10px;top:1051.38px;font-family:'Liberation Mono',monospace;font-size:23px;line-height:1;letter-spacing:0.000px;color:#000;white-space:pre;">20</div>
<div style="position:absolute;left:557.10px;top:1051.38px;font-family:'Liberation Mono',monospace;font-size:23px;line-height:1;letter-spacing:0.000px;color:#000;white-space:pre;">20</div>
<div style="position:absolute;left:613.40px;top:1052.41px;font-family:'Liberation Mono',monospace;font-size:21px;line-height:1;letter-spacing:-0.600px;color:#000;white-space:pre;">         </div>
<div style="position:absolute;left:122.90px;top:1087.38px;font-family:'Liberation Mono',monospace;font-size:23px;line-height:1;letter-spacing:0.000px;color:#000;white-space:pre;">0x010E</div>
<div style="position:absolute;left:221.10px;top:1087.38px;font-family:'Liberation Mono',monospace;font-size:23px;line-height:1;letter-spacing:0.000px;color:#000;white-space:pre;">20</div>
<div style="position:absolute;left:263.10px;top:1087.38px;font-family:'Liberation Mono',monospace;font-size:23px;line-height:1;letter-spacing:0.000px;color:#000;white-space:pre;">20</div>
<div style="position:absolute;left:305.10px;top:1087.38px;font-family:'Liberation Mono',monospace;font-size:23px;line-height:1;letter-spacing:0.000px;color:#000;white-space:pre;">20</div>
<div style="position:absolute;left:347.10px;top:1087.38px;font-family:'Liberation Mono',monospace;font-size:23px;line-height:1;letter-spacing:0.000px;color:#000;white-space:pre;">20</div>
<div style="position:absolute;left:389.10px;top:1087.38px;font-family:'Liberation Mono',monospace;font-size:23px;line-height:1;letter-spacing:0.000px;color:#000;white-space:pre;">20</div>
<div style="position:absolute;left:431.10px;top:1087.38px;font-family:'Liberation Mono',monospace;font-size:23px;line-height:1;letter-spacing:0.000px;color:#000;white-space:pre;">20</div>
<div style="position:absolute;left:473.10px;top:1087.38px;font-family:'Liberation Mono',monospace;font-size:23px;line-height:1;letter-spacing:0.000px;color:#000;white-space:pre;">F0</div>
<div style="position:absolute;left:515.10px;top:1087.38px;font-family:'Liberation Mono',monospace;font-size:23px;line-height:1;letter-spacing:0.000px;color:#000;white-space:pre;">50</div>
<div style="position:absolute;left:557.10px;top:1087.38px;font-family:'Liberation Mono',monospace;font-size:23px;line-height:1;letter-spacing:0.000px;color:#000;white-space:pre;">00</div>
<div style="position:absolute;left:613.40px;top:1088.41px;font-family:'Liberation Mono',monospace;font-size:21px;line-height:1;letter-spacing:-0.600px;color:#000;white-space:pre;">      ðP.</div>
<div style="position:absolute;left:122.90px;top:1123.38px;font-family:'Liberation Mono',monospace;font-size:23px;line-height:1;letter-spacing:0.000px;color:#000;white-space:pre;">0x0117</div>
<div style="position:absolute;left:221.10px;top:1123.38px;font-family:'Liberation Mono',monospace;font-size:23px;line-height:1;letter-spacing:0.000px;color:#000;white-space:pre;">00</div>
<div style="position:absolute;left:263.10px;top:1123.38px;font-family:'Liberation Mono',monospace;font-size:23px;line-height:1;letter-spacing:0.000px;color:#000;white-space:pre;">38</div>
<div style="position:absolute;left:305.10px;top:1123.38px;font-family:'Liberation Mono',monospace;font-size:23px;line-height:1;letter-spacing:0.000px;color:#000;white-space:pre;">32</div>
<div style="position:absolute;left:347.10px;top:1123.38px;font-family:'Liberation Mono',monospace;font-size:23px;line-height:1;letter-spacing:0.000px;color:#000;white-space:pre;">00</div>
<div style="position:absolute;left:389.10px;top:1123.38px;font-family:'Liberation Mono',monospace;font-size:23px;line-height:1;letter-spacing:0.000px;color:#000;white-space:pre;">00</div>
<div style="position:absolute;left:431.10px;top:1123.38px;font-family:'Liberation Mono',monospace;font-size:23px;line-height:1;letter-spacing:0.000px;color:#000;white-space:pre;">90</div>
<div style="position:absolute;left:473.10px;top:1123.38px;font-family:'Liberation Mono',monospace;font-size:23px;line-height:1;letter-spacing:0.000px;color:#000;white-space:pre;">02</div>
<div style="position:absolute;left:515.10px;top:1123.38px;font-family:'Liberation Mono',monospace;font-size:23px;line-height:1;letter-spacing:0.000px;color:#000;white-space:pre;">00</div>
<div style="position:absolute;left:557.10px;top:1123.38px;font-family:'Liberation Mono',monospace;font-size:23px;line-height:1;letter-spacing:0.000px;color:#000;white-space:pre;">00</div>
<div style="position:absolute;left:613.40px;top:1124.41px;font-family:'Liberation Mono',monospace;font-size:21px;line-height:1;letter-spacing:-0.600px;color:#000;white-space:pre;">.82......</div>
<div style="position:absolute;left:122.90px;top:1159.38px;font-family:'Liberation Mono',monospace;font-size:23px;line-height:1;letter-spacing:0.000px;color:#000;white-space:pre;">0x0120</div>
<div style="position:absolute;left:221.10px;top:1159.38px;font-family:'Liberation Mono',monospace;font-size:23px;line-height:1;letter-spacing:0.000px;color:#000;white-space:pre;">00</div>
<div style="position:absolute;left:263.10px;top:1159.38px;font-family:'Liberation Mono',monospace;font-size:23px;line-height:1;letter-spacing:0.000px;color:#000;white-space:pre;">00</div>
<div style="position:absolute;left:305.10px;top:1159.38px;font-family:'Liberation Mono',monospace;font-size:23px;line-height:1;letter-spacing:0.000px;color:#000;white-space:pre;">00</div>
<div style="position:absolute;left:347.10px;top:1159.38px;font-family:'Liberation Mono',monospace;font-size:23px;line-height:1;letter-spacing:0.000px;color:#000;white-space:pre;">00</div>
<div style="position:absolute;left:389.10px;top:1159.38px;font-family:'Liberation Mono',monospace;font-size:23px;line-height:1;letter-spacing:0.000px;color:#000;white-space:pre;">00</div>
<div style="position:absolute;left:431.10px;top:1159.38px;font-family:'Liberation Mono',monospace;font-size:23px;line-height:1;letter-spacing:0.000px;color:#000;white-space:pre;">00</div>
<div style="position:absolute;left:473.10px;top:1159.38px;font-family:'Liberation Mono',monospace;font-size:23px;line-height:1;letter-spacing:0.000px;color:#000;white-space:pre;">00</div>
<div style="position:absolute;left:515.10px;top:1159.38px;font-family:'Liberation Mono',monospace;font-size:23px;line-height:1;letter-spacing:0.000px;color:#000;white-space:pre;">00</div>
<div style="position:absolute;left:557.10px;top:1159.38px;font-family:'Liberation Mono',monospace;font-size:23px;line-height:1;letter-spacing:0.000px;color:#000;white-space:pre;">00</div>
<div style="position:absolute;left:613.40px;top:1160.41px;font-family:'Liberation Mono',monospace;font-size:21px;line-height:1;letter-spacing:-0.600px;color:#000;white-space:pre;">.........</div>
<div style="position:absolute;left:122.90px;top:1195.38px;font-family:'Liberation Mono',monospace;font-size:23px;line-height:1;letter-spacing:0.000px;color:#000;white-space:pre;">0x0129</div>
<div style="position:absolute;left:221.10px;top:1195.38px;font-family:'Liberation Mono',monospace;font-size:23px;line-height:1;letter-spacing:0.000px;color:#000;white-space:pre;">00</div>
<div style="position:absolute;left:263.10px;top:1195.38px;font-family:'Liberation Mono',monospace;font-size:23px;line-height:1;letter-spacing:0.000px;color:#000;white-space:pre;">00</div>
<div style="position:absolute;left:305.10px;top:1195.38px;font-family:'Liberation Mono',monospace;font-size:23px;line-height:1;letter-spacing:0.000px;color:#000;white-space:pre;">00</div>
<div style="position:absolute;left:347.10px;top:1195.38px;font-family:'Liberation Mono',monospace;font-size:23px;line-height:1;letter-spacing:0.000px;color:#000;white-space:pre;">00</div>
<div style="position:absolute;left:389.10px;top:1195.38px;font-family:'Liberation Mono',monospace;font-size:23px;line-height:1;letter-spacing:0.000px;color:#000;white-space:pre;">00</div>
<div style="position:absolute;left:431.10px;top:1195.38px;font-family:'Liberation Mono',monospace;font-size:23px;line-height:1;letter-spacing:0.000px;color:#000;white-space:pre;">00</div>
<div style="position:absolute;left:473.10px;top:1195.38px;font-family:'Liberation Mono',monospace;font-size:23px;line-height:1;letter-spacing:0.000px;color:#000;white-space:pre;">00</div>
<div style="position:absolute;left:515.10px;top:1195.38px;font-family:'Liberation Mono',monospace;font-size:23px;line-height:1;letter-spacing:0.000px;color:#000;white-space:pre;">60</div>
<div style="position:absolute;left:557.10px;top:1195.38px;font-family:'Liberation Mono',monospace;font-size:23px;line-height:1;letter-spacing:0.000px;color:#000;white-space:pre;">51</div>
<div style="position:absolute;left:613.40px;top:1196.41px;font-family:'Liberation Mono',monospace;font-size:21px;line-height:1;letter-spacing:-0.600px;color:#000;white-space:pre;">.......`Q</div>
<div style="position:absolute;left:122.90px;top:1231.38px;font-family:'Liberation Mono',monospace;font-size:23px;line-height:1;letter-spacing:0.000px;color:#000;white-space:pre;">0x0132</div>
<div style="position:absolute;left:221.10px;top:1231.38px;font-family:'Liberation Mono',monospace;font-size:23px;line-height:1;letter-spacing:0.000px;color:#000;white-space:pre;">00</div>
<div style="position:absolute;left:263.10px;top:1231.38px;font-family:'Liberation Mono',monospace;font-size:23px;line-height:1;letter-spacing:0.000px;color:#000;white-space:pre;">00</div>
<div style="position:absolute;left:305.10px;top:1231.38px;font-family:'Liberation Mono',monospace;font-size:23px;line-height:1;letter-spacing:0.000px;color:#000;white-space:pre;">A0</div>
<div style="position:absolute;left:347.10px;top:1231.38px;font-family:'Liberation Mono',monospace;font-size:23px;line-height:1;letter-spacing:0.000px;color:#000;white-space:pre;">52</div>
<div style="position:absolute;left:389.10px;top:1231.38px;font-family:'Liberation Mono',monospace;font-size:23px;line-height:1;letter-spacing:0.000px;color:#000;white-space:pre;">00</div>
<div style="position:absolute;left:431.10px;top:1231.38px;font-family:'Liberation Mono',monospace;font-size:23px;line-height:1;letter-spacing:0.000px;color:#000;white-space:pre;">00</div>
<div style="position:absolute;left:473.10px;top:1231.38px;font-family:'Liberation Mono',monospace;font-size:23px;line-height:1;letter-spacing:0.000px;color:#000;white-space:pre;">A0</div>
<div style="position:absolute;left:515.10px;top:1231.38px;font-family:'Liberation Mono',monospace;font-size:23px;line-height:1;letter-spacing:0.000px;color:#000;white-space:pre;">52</div>
<div style="position:absolute;left:557.10px;top:1231.38px;font-family:'Liberation Mono',monospace;font-size:23px;line-height:1;letter-spacing:0.000px;color:#000;white-space:pre;">00</div>
<div style="position:absolute;left:613.40px;top:1232.41px;font-family:'Liberation Mono',monospace;font-size:21px;line-height:1;letter-spacing:-0.600px;color:#000;white-space:pre;">.. R.. R.</div>
<div style="position:absolute;left:122.90px;top:1267.38px;font-family:'Liberation Mono',monospace;font-size:23px;line-height:1;letter-spacing:0.000px;color:#000;white-space:pre;">0x013B</div>
<div style="position:absolute;left:221.10px;top:1267.38px;font-family:'Liberation Mono',monospace;font-size:23px;line-height:1;letter-spacing:0.000px;color:#000;white-space:pre;">00</div>
<div style="position:absolute;left:263.10px;top:1267.38px;font-family:'Liberation Mono',monospace;font-size:23px;line-height:1;letter-spacing:0.000px;color:#000;white-space:pre;">53</div>
<div style="position:absolute;left:305.10px;top:1267.38px;font-family:'Liberation Mono',monospace;font-size:23px;line-height:1;letter-spacing:0.000px;color:#000;white-space:pre;">47</div>
<div style="position:absolute;left:347.10px;top:1267.38px;font-family:'Liberation Mono',monospace;font-size:23px;line-height:1;letter-spacing:0.000px;color:#000;white-space:pre;">53</div>
<div style="position:absolute;left:389.10px;top:1267.38px;font-family:'Liberation Mono',monospace;font-size:23px;line-height:1;letter-spacing:0.000px;color:#000;white-space:pre;">31</div>
<div style="position:absolute;left:431.10px;top:1267.38px;font-family:'Liberation Mono',monospace;font-size:23px;line-height:1;letter-spacing:0.000px;color:#000;white-space:pre;">00</div>
<div style="position:absolute;left:473.10px;top:1267.38px;font-family:'Liberation Mono',monospace;font-size:23px;line-height:1;letter-spacing:0.000px;color:#000;white-space:pre;">00</div>
<div style="position:absolute;left:515.10px;top:1267.38px;font-family:'Liberation Mono',monospace;font-size:23px;line-height:1;letter-spacing:0.000px;color:#000;white-space:pre;">A2</div>
<div style="position:absolute;left:557.10px;top:1267.38px;font-family:'Liberation Mono',monospace;font-size:23px;line-height:1;letter-spacing:0.000px;color:#000;white-space:pre;">B8</div>
<div style="position:absolute;left:613.40px;top:1268.41px;font-family:'Liberation Mono',monospace;font-size:21px;line-height:1;letter-spacing:-0.600px;color:#000;white-space:pre;">.SGS1..¢¸</div>
<div style="position:absolute;left:122.90px;top:1303.38px;font-family:'Liberation Mono',monospace;font-size:23px;line-height:1;letter-spacing:0.000px;color:#000;white-space:pre;">0x0144</div>
<div style="position:absolute;left:221.10px;top:1303.38px;font-family:'Liberation Mono',monospace;font-size:23px;line-height:1;letter-spacing:0.000px;color:#000;white-space:pre;">00</div>
<div style="position:absolute;left:263.10px;top:1303.38px;font-family:'Liberation Mono',monospace;font-size:23px;line-height:1;letter-spacing:0.000px;color:#000;white-space:pre;">00</div>
<div style="position:absolute;left:305.10px;top:1303.38px;font-family:'Liberation Mono',monospace;font-size:23px;line-height:1;letter-spacing:0.000px;color:#000;white-space:pre;">04</div>
<div style="position:absolute;left:347.10px;top:1303.38px;font-family:'Liberation Mono',monospace;font-size:23px;line-height:1;letter-spacing:0.000px;color:#000;white-space:pre;">00</div>
<div style="position:absolute;left:389.10px;top:1303.38px;font-family:'Liberation Mono',monospace;font-size:23px;line-height:1;letter-spacing:0.000px;color:#000;white-space:pre;">53</div>
<div style="position:absolute;left:431.10px;top:1303.38px;font-family:'Liberation Mono',monospace;font-size:23px;line-height:1;letter-spacing:0.000px;color:#000;white-space:pre;">44</div>
<div style="position:absolute;left:473.10px;top:1303.38px;font-family:'Liberation Mono',monospace;font-size:23px;line-height:1;letter-spacing:0.000px;color:#000;white-space:pre;">54</div>
<div style="position:absolute;left:515.10px;top:1303.38px;font-family:'Liberation Mono',monospace;font-size:23px;line-height:1;letter-spacing:0.000px;color:#000;white-space:pre;">31</div>
<div style="position:absolute;left:557.10px;top:1303.38px;font-family:'Liberation Mono',monospace;font-size:23px;line-height:1;letter-spacing:0.000px;color:#000;white-space:pre;">00</div>
<div style="position:absolute;left:613.40px;top:1304.41px;font-family:'Liberation Mono',monospace;font-size:21px;line-height:1;letter-spacing:-0.600px;color:#000;white-space:pre;">....SDT1.</div>
</div>

<!-- bottom-left table -->
<div class="abs" style="left:112px;top:1327px;width:704px;height:7px;background:linear-gradient(#c4c4c4,#dedede);"></div>
<div class="abs" style="left:113px;top:1334px;width:703px;height:46px;background:#fff;"></div>
<div class="sep" style="left:266px;top:1340px;height:36px;"></div>
<div class="sep" style="left:426px;top:1340px;height:36px;"></div>
<div class="sep" style="left:604px;top:1340px;height:36px;"></div>
<div class="abs" style="left:113px;top:1380px;width:703px;height:38px;background:#dcdcdc;"></div>
<div class="abs" style="left:113px;top:1418px;width:703px;height:6px;background:#fff;"></div>
<div class="abs" style="left:112px;top:1424px;width:704px;height:2px;background:#c9c9c9;"></div>
<div style="position:absolute;left:121.60px;top:1345.37px;font-family:'Liberation Sans',sans-serif;font-size:22px;line-height:1;letter-spacing:1.300px;color:#262626;white-space:pre;">Start</div>
<div style="position:absolute;left:275.20px;top:1345.37px;font-family:'Liberation Sans',sans-serif;font-size:22px;line-height:1;letter-spacing:0.589px;color:#262626;white-space:pre;">End</div>
<div style="position:absolute;left:434.90px;top:1345.37px;font-family:'Liberation Sans',sans-serif;font-size:22px;line-height:1;letter-spacing:1.289px;color:#262626;white-space:pre;">Length</div>
<div style="position:absolute;left:613.28px;top:1345.37px;font-family:'Liberation Sans',sans-serif;font-size:22px;line-height:1;letter-spacing:0.987px;color:#262626;white-space:pre;">Content</div>
<div style="position:absolute;left:120.28px;top:1389.79px;font-family:'Liberation Sans',sans-serif;font-size:26px;line-height:1;letter-spacing:1.632px;color:#1c1c1c;white-space:pre;">0x64</div>
<div style="position:absolute;left:273.78px;top:1389.79px;font-family:'Liberation Sans',sans-serif;font-size:26px;line-height:1;letter-spacing:0.391px;color:#1c1c1c;white-space:pre;">0x13B</div>
<div style="position:absolute;left:433.49px;top:1389.79px;font-family:'Liberation Sans',sans-serif;font-size:26px;line-height:1;letter-spacing:0.735px;color:#1c1c1c;white-space:pre;">216</div>
<div style="position:absolute;left:611.96px;top:1389.79px;font-family:'Liberation Sans',sans-serif;font-size:26px;line-height:1;letter-spacing:0.506px;color:#1c1c1c;white-space:pre;">53 44 4B 31 00</div>

<!-- RIGHT PANEL -->
<div class="abs" style="left:816px;top:279px;width:714px;height:1153px;background:#779de4;border-radius:3px;box-shadow:inset 0 0 0 1.5px #93b1ec;"></div>
<div class="abs" style="left:823px;top:284px;width:705px;height:1141px;background:#fff;overflow:hidden;">
 <div class="sep" style="left:29px;top:6px;height:36px;"></div>
 <div class="sep" style="left:378px;top:6px;height:36px;"></div>
 <div class="abs" style="left:0;top:46px;width:705px;height:1px;background:#dedede;"></div>
<div style="position:absolute;left:37.60px;top:11.27px;font-family:'Liberation Sans',sans-serif;font-size:22px;line-height:1;letter-spacing:0.593px;color:#262626;white-space:pre;">Element</div>
<div style="position:absolute;left:388.40px;top:11.27px;font-family:'Liberation Sans',sans-serif;font-size:22px;line-height:1;letter-spacing:0.600px;color:#262626;white-space:pre;">Value</div>
<div style="position:absolute;left:-1.33px;top:11.27px;font-family:'Liberation Sans',sans-serif;font-size:22px;line-height:1;letter-spacing:0.000px;color:#262626;white-space:pre;">t</div>
<div style="position:absolute;left:7.56px;top:55.59px;font-family:'Liberation Sans',sans-serif;font-size:26px;line-height:1;letter-spacing:0.800px;color:#1a1a1a;white-space:pre;">0</div>
<svg style="position:absolute;left:45.0px;top:59.0px" width="18" height="15" viewBox="0 0 18 15"><path d="M0 0 L18 0 L9 15 Z" fill="#808080"/></svg>
<div style="position:absolute;left:67.82px;top:55.59px;font-family:'Liberation Sans',sans-serif;font-size:26px;line-height:1;letter-spacing:0.800px;color:#1a1a1a;white-space:pre;">SNG file - new [0]</div>
<div style="position:absolute;left:7.56px;top:93.59px;font-family:'Liberation Sans',sans-serif;font-size:26px;line-height:1;letter-spacing:0.800px;color:#1a1a1a;white-space:pre;">0</div>
<svg style="position:absolute;left:77.0px;top:97.0px" width="18" height="15" viewBox="0 0 18 15"><path d="M0 0 L18 0 L9 15 Z" fill="#808080"/></svg>
<div style="position:absolute;left:99.20px;top:93.59px;font-family:'Liberation Sans',sans-serif;font-size:26px;line-height:1;letter-spacing:1.330px;color:#1a1a1a;white-space:pre;">header [0]</div>
<div style="position:absolute;left:7.56px;top:131.59px;font-family:'Liberation Sans',sans-serif;font-size:26px;line-height:1;letter-spacing:0.800px;color:#1a1a1a;white-space:pre;">0</div>
<div style="position:absolute;left:132.28px;top:131.59px;font-family:'Liberation Sans',sans-serif;font-size:26px;line-height:1;letter-spacing:0.712px;color:#1a1a1a;white-space:pre;">sinature</div>
<div style="position:absolute;left:385.07px;top:131.59px;font-family:'Liberation Sans',sans-serif;font-size:26px;line-height:1;letter-spacing:-0.778px;color:#1a1a1a;white-space:pre;">KORG: KORG</div>
<div style="position:absolute;left:-11.68px;top:169.59px;font-family:'Liberation Sans',sans-serif;font-size:26px;line-height:1;letter-spacing:0.800px;color:#1a1a1a;white-space:pre;"><span style="margin-right:3px">+</span>4</div>
<div style="position:absolute;left:132.91px;top:169.59px;font-family:'Liberation Sans',sans-serif;font-size:26px;line-height:1;letter-spacing:0.710px;color:#1a1a1a;white-space:pre;">version</div>
<div style="position:absolute;left:386.18px;top:169.59px;font-family:'Liberation Sans',sans-serif;font-size:26px;line-height:1;letter-spacing:0.670px;color:#1a1a1a;white-space:pre;">0x8D010201</div>
<div style="position:absolute;left:-11.31px;top:207.59px;font-family:'Liberation Sans',sans-serif;font-size:26px;line-height:1;letter-spacing:0.800px;color:#1a1a1a;white-space:pre;"><span style="margin-right:3px">+</span>8</div>
<div style="position:absolute;left:131.27px;top:207.59px;font-family:'Liberation Sans',sans-serif;font-size:26px;line-height:1;letter-spacing:0.485px;color:#1a1a1a;white-space:pre;">reserved1</div>
<div style="position:absolute;left:386.18px;top:207.59px;font-family:'Liberation Sans',sans-serif;font-size:26px;line-height:1;letter-spacing:1.264px;color:#1a1a1a;white-space:pre;">00 00 00 00 00 00 00 00</div>
<div style="position:absolute;left:-26.56px;top:245.59px;font-family:'Liberation Sans',sans-serif;font-size:26px;line-height:1;letter-spacing:0.800px;color:#1a1a1a;white-space:pre;"><span style="margin-right:3px">+</span>16</div>
<div style="position:absolute;left:132.28px;top:245.59px;font-family:'Liberation Sans',sans-serif;font-size:26px;line-height:1;letter-spacing:0.800px;color:#1a1a1a;white-space:pre;">size</div>
<div style="position:absolute;left:385.88px;top:245.59px;font-family:'Liberation Sans',sans-serif;font-size:26px;line-height:1;letter-spacing:0.800px;color:#1a1a1a;white-space:pre;">68</div>
<div style="position:absolute;left:-26.69px;top:283.59px;font-family:'Liberation Sans',sans-serif;font-size:26px;line-height:1;letter-spacing:0.800px;color:#1a1a1a;white-space:pre;"><span style="margin-right:3px">+</span>20</div>
<div style="position:absolute;left:131.68px;top:283.59px;font-family:'Liberation Sans',sans-serif;font-size:26px;line-height:1;letter-spacing:1.001px;color:#1a1a1a;white-space:pre;">68 padding bytes</div>
<div style="position:absolute;left:-26.57px;top:321.59px;font-family:'Liberation Sans',sans-serif;font-size:26px;line-height:1;letter-spacing:0.800px;color:#1a1a1a;white-space:pre;"><span style="margin-right:3px">+</span>88</div>
<svg style="position:absolute;left:77.0px;top:325.0px" width="18" height="15" viewBox="0 0 18 15"><path d="M0 0 L18 0 L9 15 Z" fill="#808080"/></svg>
<div style="position:absolute;left:99.32px;top:321.59px;font-family:'Liberation Sans',sans-serif;font-size:26px;line-height:1;letter-spacing:0.944px;color:#1a1a1a;white-space:pre;">parentDataChunk [0]</div>
<div style="position:absolute;left:7.56px;top:359.59px;font-family:'Liberation Sans',sans-serif;font-size:26px;line-height:1;letter-spacing:0.800px;color:#1a1a1a;white-space:pre;">0</div>
<div style="position:absolute;left:131.26px;top:359.59px;font-family:'Liberation Sans',sans-serif;font-size:26px;line-height:1;letter-spacing:0.800px;color:#1a1a1a;white-space:pre;">id</div>
<div style="position:absolute;left:386.02px;top:359.59px;font-family:'Liberation Sans',sans-serif;font-size:26px;line-height:1;letter-spacing:0.800px;color:#1a1a1a;white-space:pre;">SNG1</div>
<div style="position:absolute;left:-11.68px;top:397.59px;font-family:'Liberation Sans',sans-serif;font-size:26px;line-height:1;letter-spacing:0.800px;color:#1a1a1a;white-space:pre;"><span style="margin-right:3px">+</span>4</div>
<div style="position:absolute;left:132.28px;top:397.59px;font-family:'Liberation Sans',sans-serif;font-size:26px;line-height:1;letter-spacing:0.800px;color:#1a1a1a;white-space:pre;">size</div>
<div style="position:absolute;left:386.60px;top:397.59px;font-family:'Liberation Sans',sans-serif;font-size:26px;line-height:1;letter-spacing:1.165px;color:#1a1a1a;white-space:pre;">41884</div>
<div style="position:absolute;left:-11.31px;top:435.59px;font-family:'Liberation Sans',sans-serif;font-size:26px;line-height:1;letter-spacing:0.800px;color:#1a1a1a;white-space:pre;"><span style="margin-right:3px">+</span>8</div>
<div style="position:absolute;left:131.20px;top:435.59px;font-family:'Liberation Sans',sans-serif;font-size:26px;line-height:1;letter-spacing:0.765px;color:#1a1a1a;white-space:pre;">hierarchy</div>
<div style="position:absolute;left:385.40px;top:435.59px;font-family:'Liberation Sans',sans-serif;font-size:26px;line-height:1;letter-spacing:0.502px;color:#1a1a1a;white-space:pre;">hasChildren: 1024</div>
<div style="position:absolute;left:-26.40px;top:473.59px;font-family:'Liberation Sans',sans-serif;font-size:26px;line-height:1;letter-spacing:0.800px;color:#1a1a1a;white-space:pre;"><span style="margin-right:3px">+</span>12</div>
<svg style="position:absolute;left:109.0px;top:477.0px" width="18" height="15" viewBox="0 0 18 15"><path d="M0 0 L18 0 L9 15 Z" fill="#808080"/></svg>
<div style="position:absolute;left:131.91px;top:473.59px;font-family:'Liberation Sans',sans-serif;font-size:26px;line-height:1;letter-spacing:0.800px;color:#1a1a1a;white-space:pre;">data [0]</div>
<div style="position:absolute;left:1px;top:504px;width:705px;height:36px;background:#2a62d8"></div>
<div style="position:absolute;left:7.56px;top:511.59px;font-family:'Liberation Sans',sans-serif;font-size:26px;line-height:1;letter-spacing:0.800px;color:#ffffff;white-space:pre;">0</div>
<svg style="position:absolute;left:141.0px;top:515.0px" width="18" height="15" viewBox="0 0 18 15"><path d="M0 0 L18 0 L9 15 Z" fill="#ffffff"/></svg>
<div style="position:absolute;left:163.90px;top:511.59px;font-family:'Liberation Sans',sans-serif;font-size:26px;line-height:1;letter-spacing:0.800px;color:#ffffff;white-space:pre;">child [0]</div>
<div style="position:absolute;left:7.56px;top:549.59px;font-family:'Liberation Sans',sans-serif;font-size:26px;line-height:1;letter-spacing:0.800px;color:#1a1a1a;white-space:pre;">0</div>
<div style="position:absolute;left:195.26px;top:549.59px;font-family:'Liberation Sans',sans-serif;font-size:26px;line-height:1;letter-spacing:0.800px;color:#1a1a1a;white-space:pre;">id</div>
<div style="position:absolute;left:386.02px;top:549.59px;font-family:'Liberation Sans',sans-serif;font-size:26px;line-height:1;letter-spacing:0.800px;color:#1a1a1a;white-space:pre;">SDK1</div>
<div style="position:absolute;left:-11.68px;top:587.59px;font-family:'Liberation Sans',sans-serif;font-size:26px;line-height:1;letter-spacing:0.800px;color:#1a1a1a;white-space:pre;"><span style="margin-right:3px">+</span>4</div>
<div style="position:absolute;left:196.28px;top:587.59px;font-family:'Liberation Sans',sans-serif;font-size:26px;line-height:1;letter-spacing:0.800px;color:#1a1a1a;white-space:pre;">size</div>
<div style="position:absolute;left:385.89px;top:587.59px;font-family:'Liberation Sans',sans-serif;font-size:26px;line-height:1;letter-spacing:0.800px;color:#1a1a1a;white-space:pre;">204</div>
<div style="position:absolute;left:-11.31px;top:625.59px;font-family:'Liberation Sans',sans-serif;font-size:26px;line-height:1;letter-spacing:0.800px;color:#1a1a1a;white-space:pre;"><span style="margin-right:3px">+</span>8</div>
<div style="position:absolute;left:195.20px;top:625.59px;font-family:'Liberation Sans',sans-serif;font-size:26px;line-height:1;letter-spacing:0.765px;color:#1a1a1a;white-space:pre;">hierarchy</div>
<div style="position:absolute;left:385.46px;top:625.59px;font-family:'Liberation Sans',sans-serif;font-size:26px;line-height:1;letter-spacing:0.785px;color:#1a1a1a;white-space:pre;">isChild: 0x240100</div>
<div style="position:absolute;left:-26.40px;top:663.59px;font-family:'Liberation Sans',sans-serif;font-size:26px;line-height:1;letter-spacing:0.800px;color:#1a1a1a;white-space:pre;"><span style="margin-right:3px">+</span>12</div>
<svg style="position:absolute;left:175.0px;top:665.7px" width="15" height="17" viewBox="0 0 15 17"><path d="M0 0 L14.5 8.5 L0 17 Z" fill="#808080"/></svg>
<div style="position:absolute;left:195.91px;top:663.59px;font-family:'Liberation Sans',sans-serif;font-size:26px;line-height:1;letter-spacing:0.800px;color:#1a1a1a;white-space:pre;">data [0]</div>
<div style="position:absolute;left:-26.56px;top:701.59px;font-family:'Liberation Sans',sans-serif;font-size:26px;line-height:1;letter-spacing:0.800px;color:#1a1a1a;white-space:pre;"><span style="margin-right:3px">+</span>16</div>
<svg style="position:absolute;left:143.0px;top:703.7px" width="15" height="17" viewBox="0 0 15 17"><path d="M0 0 L14.5 8.5 L0 17 Z" fill="#808080"/></svg>
<div style="position:absolute;left:163.32px;top:701.59px;font-family:'Liberation Sans',sans-serif;font-size:26px;line-height:1;letter-spacing:0.800px;color:#1a1a1a;white-space:pre;">parent [0]</div>
</div>
<div class="abs" style="left:1528px;top:279px;width:2px;height:1151px;background:#c4c4c4;"></div>

<!-- status bar -->
<div class="abs" style="left:129px;top:1453px;width:32px;height:32px;border-radius:50%;background:#fff;box-shadow:0 0 0 1px #c8c8c8,0 1px 1px rgba(0,0,0,0.15);"></div>
<div class="abs" style="left:137px;top:1455px;font-size:26px;line-height:28px;color:#222;">?</div>
<div style="position:absolute;left:195.46px;top:1457.73px;font-family:'Liberation Sans',sans-serif;font-size:25px;line-height:1;letter-spacing:0.479px;color:#7b7b7b;white-space:pre;">SNG file - new[0]</div>
<div style="position:absolute;left:423.59px;top:1457.73px;font-family:'Liberation Sans',sans-serif;font-size:25px;line-height:1;letter-spacing:0.573px;color:#7b7b7b;white-space:pre;">parentChunk[0]</div>
<div style="position:absolute;left:633.75px;top:1457.73px;font-family:'Liberation Sans',sans-serif;font-size:25px;line-height:1;letter-spacing:1.130px;color:#7b7b7b;white-space:pre;">data[0]</div>
<div style="position:absolute;left:747.64px;top:1457.73px;font-family:'Liberation Sans',sans-serif;font-size:25px;line-height:1;letter-spacing:0.681px;color:#7b7b7b;white-space:pre;">childChunk[0]</div>
<div style="position:absolute;left:938.63px;top:1457.73px;font-family:'Liberation Sans',sans-serif;font-size:25px;line-height:1;letter-spacing:1.775px;color:#7b7b7b;white-space:pre;">id[0]</div>
<svg style="position:absolute;left:406.8px;top:1464px" width="9" height="14" viewBox="0 0 9 14"><path d="M1.5 1.5 L7 7 L1.5 12.5" fill="none" stroke="#7b7b7b" stroke-width="2.4"/></svg>
<svg style="position:absolute;left:615.6px;top:1464px" width="9" height="14" viewBox="0 0 9 14"><path d="M1.5 1.5 L7 7 L1.5 12.5" fill="none" stroke="#7b7b7b" stroke-width="2.4"/></svg>
<svg style="position:absolute;left:729.0px;top:1464px" width="9" height="14" viewBox="0 0 9 14"><path d="M1.5 1.5 L7 7 L1.5 12.5" fill="none" stroke="#7b7b7b" stroke-width="2.4"/></svg>
<svg style="position:absolute;left:921.9px;top:1464px" width="9" height="14" viewBox="0 0 9 14"><path d="M1.5 1.5 L7 7 L1.5 12.5" fill="none" stroke="#7b7b7b" stroke-width="2.4"/></svg>
<div class="abs" style="left:815px;top:1506px;width:12px;height:12px;border-radius:50%;background:#bdbdbd;"></div>
<div class="abs" style="left:111px;top:75px;width:1417px;height:1445px;border:1px solid rgba(0,0,0,0.22);border-radius:10px;"></div>
</body></html>
